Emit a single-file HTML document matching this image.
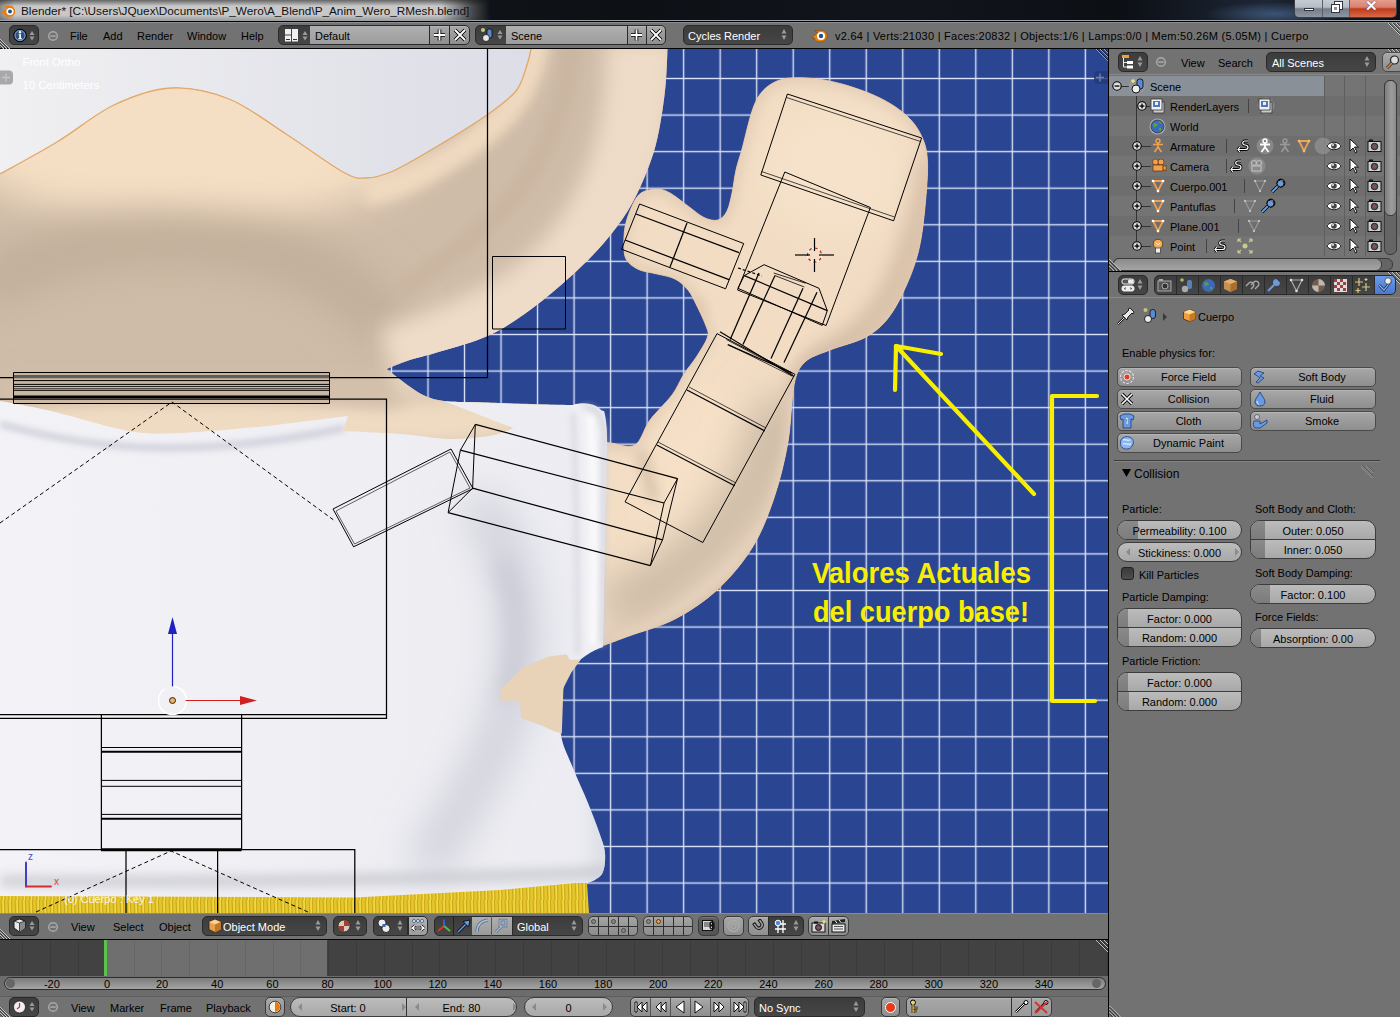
<!DOCTYPE html>
<html><head><meta charset="utf-8">
<style>
*{box-sizing:border-box;margin:0;padding:0}
html,body{width:1400px;height:1017px;overflow:hidden;background:#727272;font-family:"Liberation Sans",sans-serif;font-size:11px;color:#000}
div,span,svg{position:absolute}
.t{white-space:nowrap;line-height:12px}
#title{left:0;top:0;width:1400px;height:22px;background:linear-gradient(90deg,#15181e 0,#0d1015 45%,#11141b 65%,#0c0f14 80%,#1d2634 90%,#0e1117 100%)}
#hdr{left:0;top:22px;width:1400px;height:27px;background:#727272}
#vp{left:0;top:49px;width:1108px;height:864px;overflow:hidden}
#vsep{left:1108px;top:48px;width:1px;height:969px;background:#000}
#rp{left:1109px;top:49px;width:291px;height:968px;background:#727272;overflow:hidden}
#h3d{left:0;top:913px;width:1108px;height:27px;background:#727272}
#tl{left:0;top:940px;width:1108px;height:37px;background:#424242}
#ruler{left:0;top:976px;width:1108px;height:20px;background:#6c6c6c}
#hbot{left:0;top:996px;width:1108px;height:21px;background:#727272}
.dk{background:linear-gradient(#3c3c3c,#464646);border:1px solid #2a2a2a;border-radius:5px}
.lf{background:linear-gradient(#b0b0b0,#9c9c9c);border-top:1px solid #2a2a2a;border-bottom:1px solid #2a2a2a}
.btn{background:linear-gradient(#a8a8a8,#8e8e8e);border:1px solid #4a4a4a;border-radius:5px;box-shadow:inset 0 1px 0 rgba(255,255,255,.15)}
.num{background:linear-gradient(#bcbcbc,#a8a8a8);border:1px solid #3c3c3c;border-radius:9px;overflow:hidden}
.c{text-align:center}
</style></head>
<body>
<div id="title">
<div style="left:0;top:0;width:490px;height:20px;background:linear-gradient(180deg,rgba(20,20,20,.55) 0,rgba(20,20,20,0) 30%,rgba(20,20,20,0) 75%,rgba(40,40,40,.25) 100%),linear-gradient(90deg,rgba(150,150,150,.9) 0,rgba(200,200,200,1) 3%,rgba(200,200,200,1) 90%,rgba(120,120,120,.6) 96%,rgba(30,30,30,0) 100%)"></div>
<div style="left:1150px;top:0;width:240px;height:20px;background:radial-gradient(ellipse 70px 12px at 125px 14px,rgba(80,115,160,.6),rgba(40,60,90,0) 100%)"></div>
<svg style="left:1px;top:4px" width="16" height="14" viewBox="0 0 16 14"><path d="M1,8 L6,4 L3,2 L7,2 C9,1 13,2 14,6 C15,10 12,13 8,13 C5,13 3,11 3,9 L1,9Z" fill="#e87d0d"/><circle cx="9" cy="7.5" r="3.6" fill="#fff"/><circle cx="9" cy="7.5" r="2" fill="#24528a"/></svg>
<div class="t" style="left:21px;top:4px;font-size:11.75px;line-height:14px;color:#111">Blender* [C:\Users\JQuex\Documents\P_Wero\A_Blend\P_Anim_Wero_RMesh.blend]</div>
<div style="left:0;top:20px;width:1400px;height:1px;background:#9aa0a8"></div>
<div style="left:0;top:21px;width:1400px;height:1px;background:#000"></div>
<div style="left:1294px;top:-1px;width:103px;height:19px;border:1px solid #3a3f48;border-top:none;border-radius:0 0 5px 5px;overflow:hidden">
<div style="left:0;top:0;width:28px;height:18px;background:linear-gradient(#c8cdd4 0,#b7bdc5 45%,#767d88 55%,#8e96a2 100%);border-right:1px solid #5a606a"></div>
<div style="left:28px;top:0;width:27px;height:18px;background:linear-gradient(#c8cdd4 0,#b7bdc5 45%,#767d88 55%,#8e96a2 100%);border-right:1px solid #5a606a"></div>
<div style="left:55px;top:0;width:47px;height:18px;background:linear-gradient(#e8a090 0,#d88270 45%,#c03a1a 55%,#d86a4a 100%)"></div>
<div style="left:9px;top:9px;width:10px;height:3px;background:#fff;border:1px solid #334"></div>
<div style="left:40px;top:3px;width:7px;height:7px;border:2px solid #fff;outline:1px solid #334"></div><div style="left:37px;top:6px;width:7px;height:7px;border:2px solid #fff;outline:1px solid #334;background:#8a909a"></div>
<div class="t" style="left:70px;top:1px;font-size:15px;font-weight:bold;color:#fff;text-shadow:0 0 1px #000">&#x2715;</div>
</div>
</div>

<div id="hdr">
<div style="left:0;top:0;width:1400px;height:1px;background:#8d8d8d"></div>
<div style="left:0;top:26px;width:1400px;height:1px;background:#000"></div>
<svg style="left:0;top:16px" width="12" height="11" viewBox="0 0 12 11"><path d="M0,1 L10,11 M0,4 L7,11 M0,7 L4,11" stroke="#c8c8c8" stroke-width="1"/><path d="M0,2 L9,11 M0,5 L6,11 M0,8 L3,11" stroke="#3a3a3a" stroke-width="1"/></svg>
<svg style="left:1386px;top:1px" width="14" height="12" viewBox="0 0 14 12"><path d="M2,0 L14,12 M6,0 L14,8 M10,0 L14,4" stroke="#c8c8c8" stroke-width="1"/><path d="M3,0 L14,11 M7,0 L14,7 M11,0 L14,3" stroke="#3a3a3a" stroke-width="1"/></svg>
<div class="dk" style="left:9px;top:3px;width:30px;height:20px"></div>
<svg style="left:13px;top:6px" width="24" height="15" viewBox="0 0 24 15"><circle cx="7" cy="7.5" r="6.3" fill="#2c5080" stroke="#000" stroke-width="1"/><circle cx="7" cy="7.5" r="5" fill="none" stroke="#9ab4d8" stroke-width="0.8"/><circle cx="7" cy="4.3" r="1.2" fill="#fff"/><path d="M5.6,6.3 L8,6.3 L8,10.3 L9,10.3 L9,11.3 L5.3,11.3 L5.3,10.3 L6.3,10.3 L6.3,7.3 L5.6,7.3Z" fill="#fff"/><path d="M19,3 L21.5,7 L16.5,7Z M16.5,8.5 L21.5,8.5 L19,12.5Z" fill="#9a9a9a"/></svg>
<svg style="left:47px;top:8px" width="12" height="12" viewBox="0 0 12 12"><circle cx="6" cy="6" r="4.3" fill="none" stroke="#a8a8a8" stroke-width="1.5"/><rect x="3.3" y="5.3" width="5.4" height="1.5" fill="#a8a8a8"/></svg>
<div class="t" style="left:70px;top:8px">File</div>
<div class="t" style="left:103px;top:8px">Add</div>
<div class="t" style="left:137px;top:8px">Render</div>
<div class="t" style="left:187px;top:8px">Window</div>
<div class="t" style="left:241px;top:8px">Help</div>
<div class="dk" style="left:278px;top:3px;width:38px;height:20px;border-radius:5px 0 0 5px"></div>
<svg style="left:284px;top:6px" width="26" height="15" viewBox="0 0 26 15"><rect x="1" y="1" width="6" height="5.5" fill="#f0f0f0"/><rect x="1" y="7.5" width="6" height="6" fill="#f0f0f0"/><rect x="8" y="1" width="6" height="12.5" fill="#f0f0f0"/><rect x="2" y="11" width="4" height="1" fill="#333"/><rect x="9" y="11" width="4" height="1" fill="#333"/><path d="M21,3 L23.5,7 L18.5,7Z M18.5,8.5 L23.5,8.5 L21,12.5Z" fill="#9a9a9a"/></svg>
<div class="lf" style="left:310px;top:3px;width:120px;height:20px"></div>
<div class="t" style="left:315px;top:8px">Default</div>
<div class="btn" style="left:429px;top:3px;width:21px;height:20px;border-radius:0;border-color:#2a2a2a"></div>
<div class="btn" style="left:449px;top:3px;width:21px;height:20px;border-radius:0 5px 5px 0;border-color:#2a2a2a"></div>
<svg style="left:432px;top:6px" width="36" height="14" viewBox="0 0 36 14"><path d="M7.5,1.5 L7.5,12.5 M2,7 L13,7" stroke="#000" stroke-width="3.6"/><path d="M7.5,1.5 L7.5,12.5 M2,7 L13,7" stroke="#fff" stroke-width="1.8"/><path d="M23,2 L33,12 M33,2 L23,12" stroke="#000" stroke-width="3.6"/><path d="M23,2 L33,12 M33,2 L23,12" stroke="#fff" stroke-width="1.8"/></svg>
<div class="dk" style="left:475px;top:3px;width:36px;height:20px;border-radius:5px 0 0 5px"></div>
<svg style="left:480px;top:5px" width="26" height="16" viewBox="0 0 26 16"><circle cx="3" cy="3" r="2" fill="#e8e890" opacity=".8"/><rect x="7" y="2" width="5" height="9" rx="2" fill="#5a88c8" stroke="#000" stroke-width=".7"/><circle cx="6" cy="11" r="3.5" fill="#e8e8e8" stroke="#000" stroke-width=".7"/><path d="M20,3 L22.5,7 L17.5,7Z M17.5,8.5 L22.5,8.5 L20,12.5Z" fill="#9a9a9a"/></svg>
<div class="lf" style="left:506px;top:3px;width:122px;height:20px"></div>
<div class="t" style="left:511px;top:8px">Scene</div>
<div class="btn" style="left:627px;top:3px;width:20px;height:20px;border-radius:0;border-color:#2a2a2a"></div>
<div class="btn" style="left:646px;top:3px;width:20px;height:20px;border-radius:0 5px 5px 0;border-color:#2a2a2a"></div>
<svg style="left:629px;top:6px" width="36" height="14" viewBox="0 0 36 14"><path d="M7.5,1.5 L7.5,12.5 M2,7 L13,7" stroke="#000" stroke-width="3.6"/><path d="M7.5,1.5 L7.5,12.5 M2,7 L13,7" stroke="#fff" stroke-width="1.8"/><path d="M22,2 L32,12 M32,2 L22,12" stroke="#000" stroke-width="3.6"/><path d="M22,2 L32,12 M32,2 L22,12" stroke="#fff" stroke-width="1.8"/></svg>
<div class="dk" style="left:683px;top:3px;width:110px;height:20px"></div>
<div class="t" style="left:688px;top:8px;color:#fff">Cycles Render</div>
<svg style="left:779px;top:6px" width="10" height="14" viewBox="0 0 10 14"><path d="M5,1 L7.5,5.5 L2.5,5.5Z M2.5,7.5 L7.5,7.5 L5,12Z" fill="#9a9a9a"/></svg>
<svg style="left:811px;top:6px" width="18" height="15" viewBox="0 0 18 15"><path d="M1,9 L7,4.5 L3.5,2.5 L8,2.5 C10.5,1.5 15,2.5 16,6.5 C17,11 13.5,14 9,14 C5.5,14 3.5,12 3.5,10 L1,10Z" fill="#e87d0d" stroke="#7a3a00" stroke-width=".5"/><circle cx="10" cy="8" r="4" fill="#fff"/><circle cx="10" cy="8" r="2.2" fill="#24528a"/></svg>
<div class="t" style="left:835px;top:8px;letter-spacing:0.25px">v2.64 | Verts:21030 | Faces:20832 | Objects:1/6 | Lamps:0/0 | Mem:50.26M (5.05M) | Cuerpo</div>
</div>

<div id="vp"><svg width="1108" height="864" viewBox="0 49 1108 864">
<defs>
<pattern id="grid" x="592.34" y="60.215" width="36.52" height="36.57" patternUnits="userSpaceOnUse">
<rect width="36.52" height="36.57" fill="#2a4591"/>
<rect x="17.56" y="0" width="1.4" height="36.57" fill="#d8e2fa"/>
<rect x="0" y="17.585" width="36.52" height="1.4" fill="#d8e2fa"/>
</pattern>
<linearGradient id="gGray" x1="0" y1="0" x2="1" y2="0">
<stop offset="0" stop-color="#f0f0f2"/><stop offset="1" stop-color="#dcdde6"/>
</linearGradient>
<linearGradient id="gShirt" x1="0" y1="0" x2="1" y2="0">
<stop offset="0" stop-color="#f3f3f7"/><stop offset="0.6" stop-color="#eeeef3"/><stop offset="1" stop-color="#ececf2"/>
</linearGradient>
<filter id="b20" filterUnits="userSpaceOnUse" x="-200" y="-100" width="1500" height="1200"><feGaussianBlur stdDeviation="20"/></filter>
<filter id="b10" filterUnits="userSpaceOnUse" x="-200" y="-100" width="1500" height="1200"><feGaussianBlur stdDeviation="10"/></filter>
<filter id="b6" filterUnits="userSpaceOnUse" x="-200" y="-100" width="1500" height="1200"><feGaussianBlur stdDeviation="6"/></filter>
<filter id="b3" filterUnits="userSpaceOnUse" x="-200" y="-100" width="1500" height="1200"><feGaussianBlur stdDeviation="3"/></filter>
<clipPath id="cpShoulder"><path d="M0.0,174.0 C0.0,174.0 38.0,153.5 57.0,142.0 C76.0,130.5 95.0,114.0 114.0,105.0 C133.0,96.0 151.8,89.0 171.0,88.0 C190.2,87.0 209.8,91.3 229.0,99.0 C248.2,106.7 267.0,121.8 286.0,134.0 C305.0,146.2 329.7,164.7 343.0,172.0 C356.3,179.3 357.7,178.2 366.0,178.0 C374.3,177.8 381.3,176.2 393.0,171.0 C404.7,165.8 420.3,156.3 436.0,147.0 C451.7,137.7 473.7,124.3 487.0,115.0 C500.3,105.7 509.3,99.3 516.0,91.0 C522.7,82.7 524.5,72.0 527.0,65.0 C529.5,58.0 531.0,49.0 531.0,49.0 C531.0,49.0 667.5,49.0 667.5,49.0 C667.5,49.0 666.9,69.9 666.0,80.6 C665.1,91.3 663.8,102.4 662.0,113.3 C660.2,124.2 658.5,135.1 655.5,146.0 C652.5,156.9 648.6,167.8 644.0,178.6 C639.4,189.4 634.5,200.1 627.7,211.0 C620.9,221.9 612.5,233.1 603.0,244.0 C593.5,254.9 582.5,265.7 570.6,276.5 C558.7,287.3 545.0,299.2 531.4,309.0 C517.8,318.8 504.2,328.2 489.0,335.3 C473.8,342.4 453.7,347.3 440.0,351.6 C426.3,355.9 415.8,358.1 407.0,361.0 C398.2,363.9 387.0,369.0 387.0,369.0 C387.0,369.0 387.3,369.8 393.0,374.0 C398.7,378.2 412.5,389.5 421.0,394.0 C429.5,398.5 435.8,399.7 444.0,401.0 C452.2,402.3 470.0,402.0 470.0,402.0 C470.0,402.0 560.0,405.0 560.0,405.0 C560.0,405.0 560.0,480.0 560.0,480.0 C560.0,480.0 0.0,480.0 0.0,480.0 C0.0,480.0 0.0,174.0 0.0,174.0 Z"/></clipPath>
<clipPath id="cpHand"><path d="M777.0,81.0 C785.5,77.2 796.2,77.5 807.0,78.0 C817.8,78.5 829.8,80.7 842.0,84.0 C854.2,87.3 869.2,92.7 880.0,98.0 C890.8,103.3 900.0,109.5 907.0,116.0 C914.0,122.5 918.6,129.3 922.0,137.0 C925.4,144.7 927.0,150.3 927.5,162.0 C928.0,173.7 926.4,192.5 925.0,207.0 C923.6,221.5 922.0,236.2 919.0,249.0 C916.0,261.8 912.0,272.7 907.0,284.0 C902.0,295.3 895.8,308.2 889.0,317.0 C882.2,325.8 875.8,331.5 866.0,337.0 C856.2,342.5 840.2,345.8 830.0,350.0 C819.8,354.2 811.0,356.2 805.0,362.0 C799.0,367.8 796.8,371.7 794.0,385.0 C791.2,398.3 791.3,423.2 788.0,442.0 C784.7,460.8 780.0,480.3 774.0,498.0 C768.0,515.7 761.5,532.7 752.0,548.0 C742.5,563.3 729.8,578.2 717.0,590.0 C704.2,601.8 689.7,611.3 675.0,619.0 C660.3,626.7 641.2,631.5 629.0,636.0 C616.8,640.5 602.0,646.0 602.0,646.0 C602.0,646.0 560.0,650.0 560.0,650.0 C560.0,650.0 560.0,440.0 560.0,440.0 C560.0,440.0 584.5,439.5 593.0,440.0 C601.5,440.5 604.0,442.2 611.0,443.0 C618.0,443.8 628.5,448.8 635.0,445.0 C641.5,441.2 643.8,428.3 650.0,420.0 C656.2,411.7 666.3,402.7 672.0,395.0 C677.7,387.3 679.8,380.5 684.0,374.0 C688.2,367.5 693.1,362.2 697.0,356.0 C700.9,349.8 706.0,342.0 707.5,337.0 C709.0,332.0 707.8,331.2 706.0,326.0 C704.2,320.8 700.0,312.0 697.0,306.0 C694.0,300.0 691.7,294.5 688.0,290.0 C684.3,285.5 680.2,281.7 675.0,279.0 C669.8,276.3 663.1,275.6 657.0,274.0 C650.9,272.4 643.5,271.8 638.5,269.5 C633.5,267.2 629.4,263.9 627.0,260.5 C624.6,257.1 624.3,254.6 624.0,249.0 C623.7,243.4 623.7,234.2 625.0,227.0 C626.3,219.8 629.3,211.7 632.0,206.0 C634.7,200.3 636.8,195.8 641.0,193.0 C645.2,190.2 652.2,189.0 657.0,189.0 C661.8,189.0 664.8,190.2 670.0,193.0 C675.2,195.8 682.3,201.9 688.0,206.0 C693.7,210.1 699.0,215.2 704.0,217.5 C709.0,219.8 714.2,221.1 718.0,220.0 C721.8,218.9 724.7,215.5 727.0,211.0 C729.3,206.5 730.5,199.8 732.0,193.0 C733.5,186.2 734.3,177.3 736.0,170.0 C737.7,162.7 738.7,160.5 742.0,149.0 C745.3,137.5 750.2,112.3 756.0,101.0 C761.8,89.7 768.5,84.8 777.0,81.0 Z"/></clipPath>
<clipPath id="cpShirt"><path d="M0.0,401.0 C0.0,401.0 29.5,406.0 51.0,411.0 C72.5,416.0 107.5,427.3 129.0,431.0 C150.5,434.7 158.7,433.7 180.0,433.0 C201.3,432.3 234.3,429.2 257.0,427.0 C279.7,424.8 300.8,421.8 316.0,420.0 C331.2,418.2 348.0,416.0 348.0,416.0 C348.0,416.0 343.0,431.0 343.0,431.0 C343.0,431.0 383.2,432.7 401.0,434.0 C418.8,435.3 435.0,438.7 450.0,439.0 C465.0,439.3 480.5,437.4 491.0,435.6 C501.5,433.8 513.0,428.0 513.0,428.0 C513.0,428.0 445.0,401.6 445.0,401.6 C445.0,401.6 498.3,403.4 520.0,404.0 C541.7,404.6 575.0,405.0 575.0,405.0 C575.0,405.0 604.0,411.0 604.0,411.0 C604.0,411.0 606.8,418.8 607.0,437.0 C607.2,455.2 605.7,492.8 605.0,520.0 C604.3,547.2 603.5,579.0 603.0,600.0 C602.5,621.0 602.0,646.0 602.0,646.0 C602.0,646.0 584.8,655.5 579.0,661.0 C573.2,666.5 569.8,673.0 567.0,679.0 C564.2,685.0 563.0,687.7 562.0,697.0 C561.0,706.3 559.2,723.2 561.0,735.0 C562.8,746.8 568.5,756.7 573.0,768.0 C577.5,779.3 583.7,792.3 588.0,803.0 C592.3,813.7 596.2,823.7 599.0,832.0 C601.8,840.3 604.5,846.0 605.0,853.0 C605.5,860.0 604.8,869.0 602.0,874.0 C599.2,879.0 588.0,883.0 588.0,883.0 C588.0,883.0 560.0,900.0 560.0,900.0 C560.0,900.0 0.0,900.0 0.0,900.0 C0.0,900.0 0.0,401.0 0.0,401.0 Z"/></clipPath>
</defs>
<rect x="0" y="49" width="1108" height="864" fill="url(#grid)"/>
<path d="M0.0,49.0 C0.0,49.0 -9.5,158.5 0.0,174.0 C9.5,189.5 38.0,153.5 57.0,142.0 C76.0,130.5 95.0,114.0 114.0,105.0 C133.0,96.0 151.8,89.0 171.0,88.0 C190.2,87.0 209.8,91.3 229.0,99.0 C248.2,106.7 267.0,121.8 286.0,134.0 C305.0,146.2 329.7,164.7 343.0,172.0 C356.3,179.3 357.7,178.2 366.0,178.0 C374.3,177.8 381.3,176.2 393.0,171.0 C404.7,165.8 420.3,156.3 436.0,147.0 C451.7,137.7 473.7,124.3 487.0,115.0 C500.3,105.7 509.3,99.3 516.0,91.0 C522.7,82.7 524.5,72.0 527.0,65.0 C529.5,58.0 531.0,49.0 531.0,49.0 C531.0,49.0 0.0,49.0 0.0,49.0 Z L531,49 Z" fill="url(#gGray)"/>
<g clip-path="url(#cpShoulder)">
<rect x="0" y="49" width="700" height="440" fill="#cfbca8"/>
<ellipse cx="190" cy="140" rx="230" ry="85" fill="#f5dfc4" filter="url(#b20)"/>
<path d="M-20,290 C60,240 160,228 260,250 C330,268 370,300 390,335" stroke="#c0ae9a" stroke-width="50" fill="none" filter="url(#b20)"/>
<path d="M0,392 L430,392" stroke="#d4c1ac" stroke-width="26" fill="none" filter="url(#b10)"/>
<ellipse cx="470" cy="345" rx="55" ry="30" fill="#dccab6" filter="url(#b20)"/>
<ellipse cx="460" cy="420" rx="70" ry="25" fill="#efdbc2" filter="url(#b10)"/>
<ellipse cx="200" cy="425" rx="260" ry="22" fill="#efdac2" filter="url(#b6)"/>
<path d="M640,40 C645,150 605,240 535,295 C480,335 430,350 390,362" stroke="#eedcc8" stroke-width="70" fill="none" filter="url(#b10)"/>
<path d="M572,40 C568,100 550,150 515,195 C490,225 460,250 400,290" stroke="#c9b5a0" stroke-width="18" fill="none" filter="url(#b6)"/>
<path d="M537,40 C529,95 502,127 442,162 C405,185 385,190 365,192" stroke="#efd9bf" stroke-width="26" fill="none" filter="url(#b6)"/>
</g>
<path d="M0.0,174.0 C9.5,168.7 38.0,153.5 57.0,142.0 C76.0,130.5 95.0,114.0 114.0,105.0 C133.0,96.0 151.8,89.0 171.0,88.0 C190.2,87.0 209.8,91.3 229.0,99.0 C248.2,106.7 267.0,121.8 286.0,134.0 C305.0,146.2 329.7,164.7 343.0,172.0 C356.3,179.3 357.7,178.2 366.0,178.0 C374.3,177.8 381.3,176.2 393.0,171.0 C404.7,165.8 420.3,156.3 436.0,147.0 C451.7,137.7 473.7,124.3 487.0,115.0 C500.3,105.7 509.3,99.3 516.0,91.0 C522.7,82.7 524.5,72.0 527.0,65.0 C529.5,58.0 531.0,49.0 531.0,49.0" stroke="#e4a868" stroke-width="1.3" fill="none"/>
<g clip-path="url(#cpHand)">
<rect x="540" y="60" width="400" height="600" fill="#f2ddc4"/>
<path d="M777.0,81.0 C785.5,77.2 796.2,77.5 807.0,78.0 C817.8,78.5 829.8,80.7 842.0,84.0 C854.2,87.3 869.2,92.7 880.0,98.0 C890.8,103.3 900.0,109.5 907.0,116.0 C914.0,122.5 918.6,129.3 922.0,137.0 C925.4,144.7 927.0,150.3 927.5,162.0 C928.0,173.7 926.4,192.5 925.0,207.0 C923.6,221.5 922.0,236.2 919.0,249.0 C916.0,261.8 912.0,272.7 907.0,284.0 C902.0,295.3 895.8,308.2 889.0,317.0 C882.2,325.8 875.8,331.5 866.0,337.0 C856.2,342.5 840.2,345.8 830.0,350.0 C819.8,354.2 811.0,356.2 805.0,362.0 C799.0,367.8 796.8,371.7 794.0,385.0 C791.2,398.3 791.3,423.2 788.0,442.0 C784.7,460.8 780.0,480.3 774.0,498.0 C768.0,515.7 761.5,532.7 752.0,548.0 C742.5,563.3 729.8,578.2 717.0,590.0 C704.2,601.8 689.7,611.3 675.0,619.0 C660.3,626.7 641.2,631.5 629.0,636.0 C616.8,640.5 602.0,646.0 602.0,646.0 C602.0,646.0 560.0,650.0 560.0,650.0 C560.0,650.0 560.0,440.0 560.0,440.0 C560.0,440.0 584.5,439.5 593.0,440.0 C601.5,440.5 604.0,442.2 611.0,443.0 C618.0,443.8 628.5,448.8 635.0,445.0 C641.5,441.2 643.8,428.3 650.0,420.0 C656.2,411.7 666.3,402.7 672.0,395.0 C677.7,387.3 679.8,380.5 684.0,374.0 C688.2,367.5 693.1,362.2 697.0,356.0 C700.9,349.8 706.0,342.0 707.5,337.0 C709.0,332.0 707.8,331.2 706.0,326.0 C704.2,320.8 700.0,312.0 697.0,306.0 C694.0,300.0 691.7,294.5 688.0,290.0 C684.3,285.5 680.2,281.7 675.0,279.0 C669.8,276.3 663.1,275.6 657.0,274.0 C650.9,272.4 643.5,271.8 638.5,269.5 C633.5,267.2 629.4,263.9 627.0,260.5 C624.6,257.1 624.3,254.6 624.0,249.0 C623.7,243.4 623.7,234.2 625.0,227.0 C626.3,219.8 629.3,211.7 632.0,206.0 C634.7,200.3 636.8,195.8 641.0,193.0 C645.2,190.2 652.2,189.0 657.0,189.0 C661.8,189.0 664.8,190.2 670.0,193.0 C675.2,195.8 682.3,201.9 688.0,206.0 C693.7,210.1 699.0,215.2 704.0,217.5 C709.0,219.8 714.2,221.1 718.0,220.0 C721.8,218.9 724.7,215.5 727.0,211.0 C729.3,206.5 730.5,199.8 732.0,193.0 C733.5,186.2 734.3,177.3 736.0,170.0 C737.7,162.7 738.7,160.5 742.0,149.0 C745.3,137.5 750.2,112.3 756.0,101.0 C761.8,89.7 768.5,84.8 777.0,81.0 Z" stroke="#e2ccb5" stroke-width="12" fill="none" filter="url(#b6)"/>
<path d="M925,160 C915,260 890,320 830,352 C795,372 792,420 782,480 C765,560 705,612 612,648" stroke="#d4bca4" stroke-width="22" fill="none" filter="url(#b10)"/>
<path d="M700,300 C690,330 660,360 640,420" stroke="#e2caae" stroke-width="16" fill="none" filter="url(#b6)"/>
<ellipse cx="835" cy="170" rx="70" ry="60" fill="#f6e2ca" filter="url(#b20)"/>
<ellipse cx="700" cy="480" rx="55" ry="110" fill="#f6e1c8" filter="url(#b20)" transform="rotate(25 700 480)"/>
<path d="M605,610 C640,600 690,570 730,520 C760,480 770,440 780,400" stroke="#c9b7a3" stroke-width="46" fill="none" filter="url(#b20)"/>
<path d="M610,640 C660,625 720,590 760,530 C785,490 792,440 795,390" stroke="#ead8c4" stroke-width="10" fill="none" filter="url(#b6)"/>
<path d="M640,450 C648,470 650,490 655,500" stroke="#d8c2ac" stroke-width="12" fill="none" filter="url(#b6)"/>
</g>
<path d="M777.0,81.0 C785.5,77.2 796.2,77.5 807.0,78.0 C817.8,78.5 829.8,80.7 842.0,84.0 C854.2,87.3 869.2,92.7 880.0,98.0 C890.8,103.3 900.0,109.5 907.0,116.0 C914.0,122.5 918.6,129.3 922.0,137.0 C925.4,144.7 927.0,150.3 927.5,162.0 C928.0,173.7 926.4,192.5 925.0,207.0 C923.6,221.5 922.0,236.2 919.0,249.0 C916.0,261.8 912.0,272.7 907.0,284.0 C902.0,295.3 895.8,308.2 889.0,317.0 C882.2,325.8 875.8,331.5 866.0,337.0 C856.2,342.5 840.2,345.8 830.0,350.0 C819.8,354.2 811.0,356.2 805.0,362.0 C799.0,367.8 796.8,371.7 794.0,385.0 C791.2,398.3 791.3,423.2 788.0,442.0 C784.7,460.8 780.0,480.3 774.0,498.0 C768.0,515.7 761.5,532.7 752.0,548.0 C742.5,563.3 729.8,578.2 717.0,590.0 C704.2,601.8 689.7,611.3 675.0,619.0 C660.3,626.7 641.2,631.5 629.0,636.0 C616.8,640.5 602.0,646.0 602.0,646.0 C602.0,646.0 560.0,650.0 560.0,650.0 C560.0,650.0 560.0,440.0 560.0,440.0 C560.0,440.0 584.5,439.5 593.0,440.0 C601.5,440.5 604.0,442.2 611.0,443.0 C618.0,443.8 628.5,448.8 635.0,445.0 C641.5,441.2 643.8,428.3 650.0,420.0 C656.2,411.7 666.3,402.7 672.0,395.0 C677.7,387.3 679.8,380.5 684.0,374.0 C688.2,367.5 693.1,362.2 697.0,356.0 C700.9,349.8 706.0,342.0 707.5,337.0 C709.0,332.0 707.8,331.2 706.0,326.0 C704.2,320.8 700.0,312.0 697.0,306.0 C694.0,300.0 691.7,294.5 688.0,290.0 C684.3,285.5 680.2,281.7 675.0,279.0 C669.8,276.3 663.1,275.6 657.0,274.0 C650.9,272.4 643.5,271.8 638.5,269.5 C633.5,267.2 629.4,263.9 627.0,260.5 C624.6,257.1 624.3,254.6 624.0,249.0 C623.7,243.4 623.7,234.2 625.0,227.0 C626.3,219.8 629.3,211.7 632.0,206.0 C634.7,200.3 636.8,195.8 641.0,193.0 C645.2,190.2 652.2,189.0 657.0,189.0 C661.8,189.0 664.8,190.2 670.0,193.0 C675.2,195.8 682.3,201.9 688.0,206.0 C693.7,210.1 699.0,215.2 704.0,217.5 C709.0,219.8 714.2,221.1 718.0,220.0 C721.8,218.9 724.7,215.5 727.0,211.0 C729.3,206.5 730.5,199.8 732.0,193.0 C733.5,186.2 734.3,177.3 736.0,170.0 C737.7,162.7 738.7,160.5 742.0,149.0 C745.3,137.5 750.2,112.3 756.0,101.0 C761.8,89.7 768.5,84.8 777.0,81.0 Z" stroke="#ecc6a0" stroke-width="0.8" fill="none"/>
<g clip-path="url(#cpShirt)">
<rect x="0" y="390" width="620" height="510" fill="url(#gShirt)"/>
<path d="M0,424 C100,452 200,458 345,428" stroke="#d0d0dc" stroke-width="7" fill="none" filter="url(#b3)"/>
<path d="M475,500 C525,560 530,650 505,720 C485,780 450,820 425,870" stroke="#cdcdd9" stroke-width="36" fill="none" filter="url(#b20)"/>
<path d="M500,560 C520,600 520,660 505,700" stroke="#c6c6d2" stroke-width="14" fill="none" filter="url(#b10)"/>
<path d="M595,720 C602,780 606,830 602,880" stroke="#d8d8e2" stroke-width="18" fill="none" filter="url(#b10)"/>
<path d="M0,881 C200,883 400,880 610,872" stroke="#c8c8d0" stroke-width="10" fill="none" filter="url(#b6)"/>
</g>
<path d="M500.5,689.7 L521.0,669.0 L533.5,663.0 L549.0,656.6 L566.5,654.3 L569.7,659.8 L580.7,659.8 L571.3,672.4 L563.4,688.0 L561.8,733.7 L552.4,730.6 L543.0,726.0 L521.0,718.0 L520.0,700.7 L500.5,700.7 Z" fill="#e8d2b8"/>
<path d="M568.0,408.0 C568.0,408.0 572.3,404.7 576.0,404.0 C579.7,403.3 585.8,403.0 590.0,404.0 C594.2,405.0 598.3,406.5 601.0,410.0 C603.7,413.5 605.2,418.3 606.0,425.0 C606.8,431.7 606.2,434.2 606.0,450.0 C605.8,465.8 605.3,495.0 605.0,520.0 C604.7,545.0 604.3,578.8 604.0,600.0 C603.7,621.2 603.0,647.0 603.0,647.0 C603.0,647.0 594.5,650.2 590.0,652.0 C585.5,653.8 576.0,658.0 576.0,658.0 C576.0,658.0 574.0,593.0 573.0,560.0 C572.0,527.0 570.8,485.3 570.0,460.0 C569.2,434.7 568.0,408.0 568.0,408.0 Z" fill="#efeff4"/>
<path d="M590,415 C594,450 595,560 594,645" stroke="#fbfbfd" stroke-width="8" fill="none" filter="url(#b3)"/>
<path d="M573,412 C575,450 577,560 578,655" stroke="#bdbdca" stroke-width="2.2" fill="none" filter="url(#b3)"/>
<path d="M604,440 C604,500 603,580 602,645" stroke="#cdcdd8" stroke-width="4" fill="none" filter="url(#b3)"/>
<path d="M583,407 C597,406 604,416 605,442" stroke="#c2c2ce" stroke-width="3" fill="none" filter="url(#b3)"/>
<pattern id="pp" x="0" y="0" width="7" height="20" patternUnits="userSpaceOnUse"><rect width="7" height="20" fill="#e6c62c"/><path d="M1,0 L2,20 M4.5,0 L5,20" stroke="#c8a818" stroke-width="1"/><path d="M3,0 L3.5,20" stroke="#f6e050" stroke-width="1"/></pattern>
<path d="M0.0,896.0 L354.0,897.5 L500.0,890.0 L576.0,883.0 L587.0,883.0 L589.0,913.0 L0.0,913.0 Z" fill="url(#pp)"/>
<path d="M487.5,49.0 L487.5,377.5 L0.0,377.5" stroke="#000" stroke-width="1.25" fill="none"/>
<path d="M492.5,256.5 L565.5,256.5 L565.5,329.0 L492.5,329.0 L492.5,256.5" stroke="#000" stroke-width="1.0" fill="none"/>
<rect x="13.5" y="372.5" width="316" height="31" fill="#c0ae9c" opacity="0.55"/>
<path d="M13.5,372.5 L329.5,372.5 L329.5,403.5 L13.5,403.5 L13.5,372.5" stroke="#000" stroke-width="1.0" fill="none"/>
<path d="M13.5,376.0 L329.5,376.0" stroke="#000" stroke-width="1" fill="none"/>
<path d="M13.5,380.6 L329.5,380.6" stroke="#000" stroke-width="1" fill="none"/>
<path d="M13.5,384.4 L329.5,384.4" stroke="#000" stroke-width="1" fill="none"/>
<path d="M13.5,386.5 L329.5,386.5" stroke="#000" stroke-width="0.8" fill="none"/>
<path d="M13.5,388.8 L329.5,388.8" stroke="#000" stroke-width="0.8" fill="none"/>
<path d="M13.5,390.5 L329.5,390.5" stroke="#000" stroke-width="0.8" fill="none"/>
<path d="M13.5,396.8 L329.5,396.8" stroke="#000" stroke-width="2.8" fill="none"/>
<path d="M0.0,399.0 L386.5,399.0 L386.5,718.3 L0.0,718.3" stroke="#000" stroke-width="1.25" fill="none"/>
<path d="M0.0,714.6 L386.5,714.6" stroke="#000" stroke-width="1.25" fill="none"/>
<path d="M0.0,523.0 L172.0,402.0 L334.6,520.7" stroke="#000" stroke-width="1.0" fill="none" stroke-dasharray="4 3"/>
<path d="M101.4,714.6 L101.4,850.0" stroke="#000" stroke-width="1.25" fill="none"/>
<path d="M241.6,714.6 L241.6,850.0" stroke="#000" stroke-width="1.25" fill="none"/>
<path d="M101.4,747.5 L241.6,747.5" stroke="#000" stroke-width="1" fill="none"/>
<path d="M101.4,751.7 L241.6,751.7" stroke="#000" stroke-width="2" fill="none"/>
<path d="M101.4,780.4 L241.6,780.4" stroke="#000" stroke-width="1" fill="none"/>
<path d="M101.4,786.3 L241.6,786.3" stroke="#000" stroke-width="1" fill="none"/>
<path d="M101.4,814.4 L241.6,814.4" stroke="#000" stroke-width="1" fill="none"/>
<path d="M101.4,818.7 L241.6,818.7" stroke="#000" stroke-width="2" fill="none"/>
<path d="M0.0,849.5 L354.8,849.5 L354.8,913.0" stroke="#000" stroke-width="1.25" fill="none"/>
<path d="M101.0,849.8 L241.6,849.8" stroke="#000" stroke-width="3" fill="none"/>
<path d="M126.0,850.0 L126.0,913.0" stroke="#000" stroke-width="1.25" fill="none"/>
<path d="M217.6,850.0 L217.6,913.0" stroke="#000" stroke-width="1.25" fill="none"/>
<path d="M36.0,912.0 L171.0,851.0 L308.0,912.0" stroke="#000" stroke-width="1.0" fill="none" stroke-dasharray="4 3"/>
<path d="M333.0,509.0 L353.6,546.8 L473.0,488.6 L451.0,449.0 L333.0,509.0" stroke="#000" stroke-width="1.0" fill="none"/>
<path d="M336.0,511.0 L354.5,544.0 L470.0,488.0 L450.0,452.0 L336.0,511.0" stroke="#000" stroke-width="0.6" fill="none"/>
<path d="M475.3,424.4 L677.5,478.7" stroke="#000" stroke-width="1.25" fill="none"/>
<path d="M448.1,512.6 L650.4,565.6" stroke="#000" stroke-width="1.25" fill="none"/>
<path d="M460.4,450.2 L664.0,503.0" stroke="#000" stroke-width="1.25" fill="none"/>
<path d="M472.6,488.2 L662.6,539.8" stroke="#000" stroke-width="1.25" fill="none"/>
<path d="M475.3,424.4 L472.6,488.2 L448.1,512.6 L460.4,450.2 L475.3,424.4" stroke="#000" stroke-width="1.0" fill="none"/>
<path d="M677.5,478.7 L662.6,539.8 L650.4,565.6 L664.0,503.0 L677.5,478.7" stroke="#000" stroke-width="1.0" fill="none"/>
<path d="M717.0,333.6 L794.9,374.3 L702.8,542.5 L625.0,501.8 L717.0,333.6" stroke="#000" stroke-width="1.0" fill="none"/>
<path d="M687.0,390.0 L764.8,431.0" stroke="#000" stroke-width="1.25" fill="none"/>
<path d="M689.0,387.0 L766.0,428.0" stroke="#000" stroke-width="0.7" fill="none"/>
<path d="M656.8,445.0 L734.7,485.8" stroke="#000" stroke-width="1.25" fill="none"/>
<path d="M658.0,442.0 L736.0,483.0" stroke="#000" stroke-width="0.7" fill="none"/>
<path d="M729.0,345.0 L792.0,376.0" stroke="#000" stroke-width="0.7" fill="none"/>
<path d="M787.4,94.0 L921.6,138.0 L893.6,220.8 L760.8,175.0 L787.4,94.0" stroke="#000" stroke-width="1.0" fill="none"/>
<path d="M786.5,97.5 L920.5,141.5" stroke="#000" stroke-width="0.7" fill="none"/>
<path d="M761.5,171.5 L894.5,217.0" stroke="#000" stroke-width="0.7" fill="none"/>
<path d="M784.8,172.0 L870.4,207.5 L826.1,325.5 L737.6,290.0 L784.8,172.0" stroke="#000" stroke-width="1.0" fill="none"/>
<path d="M764.1,264.7 L819.0,288.3 L827.3,310.7 L822.2,325.4 L737.9,288.3 L744.3,275.6 L764.1,264.7" stroke="#000" stroke-width="1.0" fill="none"/>
<path d="M744.3,275.6 L827.3,310.7" stroke="#000" stroke-width="1.25" fill="none"/>
<path d="M759.0,273.0 L730.2,339.5" stroke="#000" stroke-width="1.25" fill="none"/>
<path d="M775.0,275.6 L743.0,344.6" stroke="#000" stroke-width="1.25" fill="none"/>
<path d="M803.0,288.3 L771.0,358.6" stroke="#000" stroke-width="1.25" fill="none"/>
<path d="M817.0,292.2 L784.0,362.5" stroke="#000" stroke-width="1.25" fill="none"/>
<path d="M720.0,331.8 L794.0,376.5" stroke="#000" stroke-width="1.25" fill="none"/>
<path d="M727.7,344.6 L791.6,372.7" stroke="#000" stroke-width="1.25" fill="none"/>
<path d="M726.4,339.5 L792.8,374.6" stroke="#000" stroke-width="0.8" fill="none"/>
<path d="M775.0,275.6 L804.3,287.0" stroke="#000" stroke-width="0.8" fill="none"/>
<path d="M773.7,273.0 L805.6,283.2" stroke="#000" stroke-width="0.8" fill="none"/>
<path d="M738.0,268.0 L762.0,276.0" stroke="#000" stroke-width="1.25" fill="none" stroke-dasharray="3 2"/>
<path d="M639.6,204.0 L743.7,243.5 L725.6,288.8 L621.5,249.2 L639.6,204.0" stroke="#000" stroke-width="1.0" fill="none"/>
<path d="M636.0,214.0 L739.0,252.6" stroke="#000" stroke-width="1.25" fill="none"/>
<path d="M625.0,240.0 L729.0,279.7" stroke="#000" stroke-width="1.25" fill="none"/>
<path d="M687.0,223.0 L670.0,267.0" stroke="#000" stroke-width="1.25" fill="none"/>
<circle cx="814.5" cy="255" r="7" fill="none" stroke="#fff" stroke-width="1.2" stroke-dasharray="3 3"/><circle cx="814.5" cy="255" r="7" fill="none" stroke="#c02020" stroke-width="1.2" stroke-dasharray="3 3" stroke-dashoffset="3"/>
<path d="M814.5,238.0 L814.5,251.0" stroke="#000" stroke-width="1.2" fill="none"/>
<path d="M814.5,259.0 L814.5,272.0" stroke="#000" stroke-width="1.2" fill="none"/>
<path d="M795.0,255.0 L810.0,255.0" stroke="#000" stroke-width="1.2" fill="none"/>
<path d="M819.0,255.0 L834.0,255.0" stroke="#000" stroke-width="1.2" fill="none"/>
<circle cx="172.5" cy="700.5" r="14" fill="none" stroke="#fff" stroke-width="1.5" stroke-dasharray="80 8" stroke-dashoffset="-65"/>
<path d="M172.5,686.0 L172.5,632.0" stroke="#2020c0" stroke-width="1.2" fill="none" stroke-linecap="round" stroke-linejoin="round"/>
<path d="M172.5,617 L168,634 L177,634Z" fill="#2020c0"/>
<path d="M186.0,700.5 L242.0,700.5" stroke="#d02020" stroke-width="1.2" fill="none" stroke-linecap="round" stroke-linejoin="round"/>
<path d="M257,700.5 L240,696 L240,705Z" fill="#d02020"/>
<circle cx="172.5" cy="700.5" r="3" fill="#f0b060" stroke="#000" stroke-width=".8"/>
<path d="M26.0,862.5 L26.0,886.6" stroke="#4040c0" stroke-width="2" fill="none" stroke-linecap="round" stroke-linejoin="round"/>
<path d="M26.0,886.6 L51.0,886.6" stroke="#d03030" stroke-width="2" fill="none" stroke-linecap="round" stroke-linejoin="round"/>
<path d="M1034.0,494.0 L896.0,346.0" stroke="#f8ef00" stroke-width="4.2" fill="none" stroke-linecap="round" stroke-linejoin="round"/>
<path d="M941.0,354.0 L896.0,346.0 L895.0,390.0" stroke="#f8ef00" stroke-width="4.2" fill="none" stroke-linecap="round" stroke-linejoin="round"/>
<path d="M1097.0,396.0 L1052.0,396.0 L1052.0,701.0 L1095.0,701.0" stroke="#f8ef00" stroke-width="4.2" fill="none" stroke-linecap="round" stroke-linejoin="round"/>
<text x="812" y="583" font-family="Liberation Sans" font-weight="bold" font-size="29" fill="#f8ef00" textLength="219" lengthAdjust="spacingAndGlyphs">Valores Actuales</text>
<text x="813" y="621.5" font-family="Liberation Sans" font-weight="bold" font-size="29" fill="#f8ef00" textLength="216" lengthAdjust="spacingAndGlyphs">del cuerpo base!</text>
<text x="22.5" y="65.5" font-family="Liberation Sans" font-size="11.3" fill="#ffffff">Front Ortho</text>
<text x="22.5" y="89" font-family="Liberation Sans" font-size="11.3" fill="#ffffff">10 Centimeters</text>
<rect x="-6" y="70.5" width="19" height="14" rx="4" fill="#a8a8a8"/>
<path d="M6,73.5 L6,81.5 M2,77.5 L10,77.5" stroke="#c4c4c4" stroke-width="1.4"/>
<rect x="1094" y="71" width="20" height="13" rx="4" fill="#23397a" opacity=".85"/>
<path d="M1100,73.5 L1100,81.5 M1096,77.5 L1104,77.5" stroke="#7080b0" stroke-width="1.4"/>
<path d="M1096,49 L1108,61 M1100,49 L1108,57 M1104,49 L1108,53" stroke="#8aa0d8" stroke-width="1"/><path d="M1097,49 L1108,60 M1101,49 L1108,56 M1105,49 L1108,52" stroke="#101830" stroke-width="1"/>
<text x="28" y="860" font-family="Liberation Sans" font-size="10" fill="#4a4ad0">z</text>
<text x="54" y="885" font-family="Liberation Sans" font-size="10" fill="#d04040">x</text>
<text x="64" y="903" font-family="Liberation Sans" font-size="11" fill="#f4f4f4">(0) Cuerpo : Key 1</text>
</svg></div>
<!--VPOVERLAY-->
<div id="vsep"></div>
<div id="rp"><div class="" style="left:0.0px;top:0.0px;width:291.0px;height:26.0px;background:#727272"></div>
<div class="" style="left:0.0px;top:25.0px;width:291.0px;height:1.0px;background:#8a8a8a"></div>
<svg style="left:277.0px;top:0.0px" width="14" height="12" viewBox="0 0 14 12"><path d="M2,0 L14,12 M6,0 L14,8 M10,0 L14,4" stroke="#c8c8c8" stroke-width="1"/><path d="M3,0 L14,11 M7,0 L14,7 M11,0 L14,3" stroke="#3a3a3a" stroke-width="1"/></svg>
<div class="dk" style="left:9.0px;top:3.0px;width:30.0px;height:20.0px;"></div>
<svg style="left:12.0px;top:5.0px" width="26" height="16" viewBox="0 0 26 16"><rect x="1" y="1" width="7" height="3" fill="#f0a040"/><path d="M2.5,4 L2.5,13 L6,13 M2.5,8.5 L6,8.5" stroke="#eee" stroke-width="1" fill="none"/><rect x="6" y="7" width="6" height="3" fill="#fff"/><rect x="6" y="11.5" width="6" height="3" fill="#fff"/><g transform="translate(14,1)"><path d="M5,1 L7.5,5.5 L2.5,5.5Z M2.5,7.5 L7.5,7.5 L5,12Z" fill="#9a9a9a"/></g></svg>
<svg style="left:46.0px;top:7.0px" width="12" height="12" viewBox="0 0 12 12"><circle cx="6" cy="6" r="4.3" fill="none" stroke="#a8a8a8" stroke-width="1.5"/><rect x="3.3" y="5.3" width="5.4" height="1.5" fill="#a8a8a8"/></svg>
<div class="t" style="left:72.0px;top:8.0px;">View</div>
<div class="t" style="left:109.0px;top:8.0px;">Search</div>
<div class="dk" style="left:157.0px;top:3.0px;width:110.0px;height:20.0px;"></div>
<div class="t" style="left:163.0px;top:8.0px;color:#fff">All Scenes</div>
<svg style="left:253.0px;top:6.0px" width="10" height="14" viewBox="0 0 10 14"><path d="M5,1 L7.5,5.5 L2.5,5.5Z M2.5,7.5 L7.5,7.5 L5,12Z" fill="#9a9a9a"/></svg>
<div class="btn" style="left:273.0px;top:3.0px;width:22.0px;height:20.0px;"></div>
<svg style="left:276.0px;top:5.0px" width="16" height="16" viewBox="0 0 16 16"><circle cx="9.5" cy="6" r="4" fill="#ddd" stroke="#222" stroke-width="1.2"/><path d="M7,9 L2,14" stroke="#222" stroke-width="3"/><path d="M7,9 L2,14" stroke="#e88a3a" stroke-width="1.6"/></svg>
<div class="" style="left:0.0px;top:27.0px;width:291.0px;height:20.0px;background:#747474"></div>
<div class="" style="left:0.0px;top:47.0px;width:291.0px;height:20.0px;background:#6e6e6e"></div>
<div class="" style="left:0.0px;top:67.0px;width:291.0px;height:20.0px;background:#747474"></div>
<div class="" style="left:0.0px;top:87.0px;width:291.0px;height:20.0px;background:#6e6e6e"></div>
<div class="" style="left:0.0px;top:107.0px;width:291.0px;height:20.0px;background:#747474"></div>
<div class="" style="left:0.0px;top:127.0px;width:291.0px;height:20.0px;background:#6e6e6e"></div>
<div class="" style="left:0.0px;top:147.0px;width:291.0px;height:20.0px;background:#747474"></div>
<div class="" style="left:0.0px;top:167.0px;width:291.0px;height:20.0px;background:#6e6e6e"></div>
<div class="" style="left:0.0px;top:187.0px;width:291.0px;height:20.0px;background:#747474"></div>
<div class="" style="left:0.0px;top:27.0px;width:215.0px;height:20.0px;background:#8a9098"></div>
<div class="" style="left:0.0px;top:207.0px;width:291.0px;height:2.0px;background:#727272"></div>
<div class="" style="left:215.0px;top:27.0px;width:1.0px;height:180.0px;background:#5f5f5f"></div>
<div class="" style="left:235.0px;top:27.0px;width:1.0px;height:180.0px;background:#5f5f5f"></div>
<div class="" style="left:256.0px;top:27.0px;width:1.0px;height:180.0px;background:#5f5f5f"></div>
<div class="" style="left:27.0px;top:47.0px;width:1.0px;height:153.0px;background:#333"></div>
<div class="" style="left:12.0px;top:37.0px;width:8.0px;height:1.0px;background:#333"></div>
<div class="" style="left:28.0px;top:97.0px;width:14.0px;height:1.0px;background:#333"></div>
<div class="" style="left:28.0px;top:117.0px;width:14.0px;height:1.0px;background:#333"></div>
<div class="" style="left:28.0px;top:137.0px;width:14.0px;height:1.0px;background:#333"></div>
<div class="" style="left:28.0px;top:157.0px;width:14.0px;height:1.0px;background:#333"></div>
<div class="" style="left:28.0px;top:177.0px;width:14.0px;height:1.0px;background:#333"></div>
<div class="" style="left:28.0px;top:197.0px;width:14.0px;height:1.0px;background:#333"></div>
<div class="" style="left:33.0px;top:57.0px;width:8.0px;height:1.0px;background:#333"></div>
<svg style="left:3.0px;top:32.0px" width="10" height="10" viewBox="0 0 10 10"><circle cx="5" cy="5" r="4.2" fill="#ddd" stroke="#000" stroke-width="1.1"/><rect x="2.6" y="4.4" width="4.8" height="1.3" fill="#000"/></svg>
<svg style="left:28.0px;top:52.0px" width="10" height="10" viewBox="0 0 10 10"><circle cx="5" cy="5" r="4.2" fill="#ddd" stroke="#000" stroke-width="1.1"/><rect x="2.6" y="4.4" width="4.8" height="1.3" fill="#000"/><rect x="4.4" y="2.6" width="1.3" height="4.8" fill="#000"/></svg>
<svg style="left:23.0px;top:92.0px" width="10" height="10" viewBox="0 0 10 10"><circle cx="5" cy="5" r="4.2" fill="#ddd" stroke="#000" stroke-width="1.1"/><rect x="2.6" y="4.4" width="4.8" height="1.3" fill="#000"/><rect x="4.4" y="2.6" width="1.3" height="4.8" fill="#000"/></svg>
<svg style="left:23.0px;top:112.0px" width="10" height="10" viewBox="0 0 10 10"><circle cx="5" cy="5" r="4.2" fill="#ddd" stroke="#000" stroke-width="1.1"/><rect x="2.6" y="4.4" width="4.8" height="1.3" fill="#000"/><rect x="4.4" y="2.6" width="1.3" height="4.8" fill="#000"/></svg>
<svg style="left:23.0px;top:132.0px" width="10" height="10" viewBox="0 0 10 10"><circle cx="5" cy="5" r="4.2" fill="#ddd" stroke="#000" stroke-width="1.1"/><rect x="2.6" y="4.4" width="4.8" height="1.3" fill="#000"/><rect x="4.4" y="2.6" width="1.3" height="4.8" fill="#000"/></svg>
<svg style="left:23.0px;top:152.0px" width="10" height="10" viewBox="0 0 10 10"><circle cx="5" cy="5" r="4.2" fill="#ddd" stroke="#000" stroke-width="1.1"/><rect x="2.6" y="4.4" width="4.8" height="1.3" fill="#000"/><rect x="4.4" y="2.6" width="1.3" height="4.8" fill="#000"/></svg>
<svg style="left:23.0px;top:172.0px" width="10" height="10" viewBox="0 0 10 10"><circle cx="5" cy="5" r="4.2" fill="#ddd" stroke="#000" stroke-width="1.1"/><rect x="2.6" y="4.4" width="4.8" height="1.3" fill="#000"/><rect x="4.4" y="2.6" width="1.3" height="4.8" fill="#000"/></svg>
<svg style="left:23.0px;top:192.0px" width="10" height="10" viewBox="0 0 10 10"><circle cx="5" cy="5" r="4.2" fill="#ddd" stroke="#000" stroke-width="1.1"/><rect x="2.6" y="4.4" width="4.8" height="1.3" fill="#000"/><rect x="4.4" y="2.6" width="1.3" height="4.8" fill="#000"/></svg>
<svg style="left:19.0px;top:28.0px" width="18" height="18" viewBox="0 0 18 18"><circle cx="9" cy="9" r="8.5" fill="#999" opacity=".6"/><circle cx="5" cy="4" r="1.8" fill="#e8e880"/><rect x="9" y="2" width="6" height="10" rx="2.5" fill="#5a8ad0" stroke="#000" stroke-width=".8"/><circle cx="8" cy="12" r="4" fill="#eee" stroke="#000" stroke-width=".9"/></svg>
<div class="t" style="left:41.0px;top:32.0px;">Scene</div>
<svg style="left:41.0px;top:49.0px" width="16" height="16" viewBox="0 0 16 16"><rect x="3" y="4" width="11" height="11" fill="#ccc" stroke="#333" stroke-width=".8"/><rect x="1" y="1" width="11" height="11" fill="#f0f0f0" stroke="#333" stroke-width=".8"/><rect x="3" y="3" width="7" height="6" fill="#4a7ac0"/><rect x="5" y="4" width="3" height="3" fill="#eee"/></svg>
<div class="t" style="left:61.0px;top:52.0px;">RenderLayers</div>
<div class="" style="left:139.0px;top:50.0px;width:1.0px;height:14.0px;background:#444"></div>
<svg style="left:148.0px;top:48.0px" width="18" height="18" viewBox="0 0 18 18"><circle cx="9" cy="9" r="8.5" fill="#999" opacity=".6"/><g transform="translate(1,1)"><rect x="3" y="4" width="11" height="11" fill="#ccc" stroke="#333" stroke-width=".8"/><rect x="1" y="1" width="11" height="11" fill="#f0f0f0" stroke="#333" stroke-width=".8"/><rect x="3" y="3" width="7" height="6" fill="#4a7ac0"/><rect x="5" y="4" width="3" height="3" fill="#eee"/></g></svg>
<svg style="left:40.0px;top:69.0px" width="17" height="17" viewBox="0 0 17 17"><circle cx="8.5" cy="8.5" r="8" fill="#aab"/><circle cx="8.5" cy="8.5" r="6.5" fill="#3a6ab8" stroke="#222" stroke-width=".6"/><path d="M4,6 C6,4 8,5 9,7 C8,9 6,8 5,10Z M10,10 C12,9 13,11 12,13 C10,13 10,12 10,10Z M9,3 C11,3 12,4 13,6 C11,6 10,5 9,3Z" fill="#5aa040"/></svg>
<div class="t" style="left:61.0px;top:72.0px;">World</div>
<svg style="left:42.0px;top:89.0px" width="14" height="16" viewBox="0 0 14 16"><circle cx="7" cy="3" r="2" fill="none" stroke="#f0a050" stroke-width="1.4"/><path d="M7,5 L7,9 M2,6.5 L12,6.5 M7,9 L3.5,14 M7,9 L10.5,14" stroke="#f0a050" stroke-width="1.6" fill="none"/></svg>
<div class="t" style="left:61.0px;top:92.0px;">Armature</div>
<div class="" style="left:117.0px;top:90.0px;width:1.0px;height:14.0px;background:#444"></div>
<svg style="left:128.0px;top:89.0px" width="16" height="16" viewBox="0 0 16 16"><path d="M3,14 L1,11.5 L3,9 M1.5,11.5 L8,11.5 C12,11.5 12,7 8,7 C5,7 5,3 8,3 L11,3" stroke="#000" stroke-width="2.8" fill="none"/><path d="M3,14 L1,11.5 L3,9 M1.5,11.5 L8,11.5 C12,11.5 12,7 8,7 C5,7 5,3 8,3 L11,3" stroke="#fff" stroke-width="1.2" fill="none"/></svg>
<svg style="left:147.0px;top:88.0px" width="18" height="18" viewBox="0 0 18 18"><circle cx="9" cy="9" r="8.5" fill="#999" opacity=".6"/><g transform="translate(2,1) scale(1)"><circle cx="7" cy="3" r="2" fill="none" stroke="#fff" stroke-width="1.4"/><path d="M7,5 L7,9 M2,6.5 L12,6.5 M7,9 L3.5,14 M7,9 L10.5,14" stroke="#fff" stroke-width="1.8" fill="none"/></g></svg>
<svg style="left:169.0px;top:89.0px" width="16" height="16" viewBox="0 0 16 16"><circle cx="7" cy="3" r="2" fill="none" stroke="#9a9a9a" stroke-width="1.4"/><path d="M7,5 L7,9 M2,6.5 L12,6.5 M7,9 L3.5,14 M7,9 L10.5,14" stroke="#9a9a9a" stroke-width="1.6" fill="none"/></svg>
<svg style="left:188.0px;top:89.0px" width="16" height="16" viewBox="0 0 16 16"><path d="M2,3 L12,3 L7,13Z" fill="none" stroke="#f0a050" stroke-width="1.8"/><circle cx="2" cy="3" r="1.3" fill="#f0c080"/><circle cx="12" cy="3" r="1.3" fill="#f0c080"/><circle cx="7" cy="13" r="1.3" fill="#f0c080"/></svg>
<svg style="left:205.0px;top:88.0px" width="18" height="18" viewBox="0 0 18 18"><circle cx="9" cy="9" r="8.5" fill="#999" opacity=".6"/></svg>
<svg style="left:42.0px;top:109.0px" width="16" height="16" viewBox="0 0 16 16"><circle cx="4.5" cy="4" r="3" fill="#f0a050" stroke="#6a3000" stroke-width=".7"/><circle cx="10" cy="4" r="3" fill="#f0a050" stroke="#6a3000" stroke-width=".7"/><rect x="2" y="7" width="10" height="6" fill="#f0a050" stroke="#6a3000" stroke-width=".7"/><path d="M12,9 L15,7 L15,13 L12,11Z" fill="#f0a050" stroke="#6a3000" stroke-width=".7"/></svg>
<div class="t" style="left:61.0px;top:112.0px;">Camera</div>
<div class="" style="left:117.0px;top:110.0px;width:1.0px;height:14.0px;background:#444"></div>
<svg style="left:121.0px;top:109.0px" width="16" height="16" viewBox="0 0 16 16"><path d="M3,14 L1,11.5 L3,9 M1.5,11.5 L8,11.5 C12,11.5 12,7 8,7 C5,7 5,3 8,3 L11,3" stroke="#000" stroke-width="2.8" fill="none"/><path d="M3,14 L1,11.5 L3,9 M1.5,11.5 L8,11.5 C12,11.5 12,7 8,7 C5,7 5,3 8,3 L11,3" stroke="#fff" stroke-width="1.2" fill="none"/></svg>
<svg style="left:139.0px;top:108.0px" width="18" height="18" viewBox="0 0 18 18"><circle cx="9" cy="9" r="8.5" fill="#999" opacity=".6"/><circle cx="6" cy="6" r="2.5" fill="none" stroke="#bbb" stroke-width="1.2"/><circle cx="11" cy="6" r="2.5" fill="none" stroke="#bbb" stroke-width="1.2"/><rect x="4" y="9" width="9" height="5" fill="none" stroke="#bbb" stroke-width="1.2"/></svg>
<svg style="left:42.0px;top:129.0px" width="14" height="16" viewBox="0 0 14 16"><path d="M2,3 L12,3 L7,13Z" fill="none" stroke="#f0a050" stroke-width="1.8"/><circle cx="2" cy="3" r="1.3" fill="#fff"/><circle cx="12" cy="3" r="1.3" fill="#fff"/><circle cx="7" cy="13" r="1.3" fill="#fff"/></svg>
<div class="t" style="left:61.0px;top:132.0px;">Cuerpo.001</div>
<div class="" style="left:135.0px;top:130.0px;width:1.0px;height:14.0px;background:#444"></div>
<svg style="left:144.0px;top:129.0px" width="14" height="16" viewBox="0 0 14 16"><path d="M2,3 L12,3 L7,13Z" fill="none" stroke="#9a9a9a" stroke-width="1.2"/><circle cx="2" cy="3" r="1.1" fill="#ccc"/><circle cx="12" cy="3" r="1.1" fill="#ccc"/><circle cx="7" cy="13" r="1.1" fill="#ccc"/></svg>
<svg style="left:161.0px;top:129.0px" width="16" height="16" viewBox="0 0 16 16"><path d="M2,14 L8,8" stroke="#000" stroke-width="3.4"/><path d="M2,14 L8,8" stroke="#6a9ae0" stroke-width="2"/><path d="M7,6 A4,4 0 1,1 10,9 L12,7 L13,3 L11,5 L9.5,4.5 L9,3 L11,1" fill="none" stroke="#000" stroke-width="1"/><circle cx="10.5" cy="5.5" r="3.5" fill="#6a9ae0" stroke="#000" stroke-width=".9"/><path d="M10,2 L13,2 L13,5Z" fill="#727272"/></svg>
<svg style="left:42.0px;top:149.0px" width="14" height="16" viewBox="0 0 14 16"><path d="M2,3 L12,3 L7,13Z" fill="none" stroke="#f0a050" stroke-width="1.8"/><circle cx="2" cy="3" r="1.3" fill="#fff"/><circle cx="12" cy="3" r="1.3" fill="#fff"/><circle cx="7" cy="13" r="1.3" fill="#fff"/></svg>
<div class="t" style="left:61.0px;top:152.0px;">Pantuflas</div>
<div class="" style="left:125.0px;top:150.0px;width:1.0px;height:14.0px;background:#444"></div>
<svg style="left:134.0px;top:149.0px" width="14" height="16" viewBox="0 0 14 16"><path d="M2,3 L12,3 L7,13Z" fill="none" stroke="#9a9a9a" stroke-width="1.2"/><circle cx="2" cy="3" r="1.1" fill="#ccc"/><circle cx="12" cy="3" r="1.1" fill="#ccc"/><circle cx="7" cy="13" r="1.1" fill="#ccc"/></svg>
<svg style="left:151.0px;top:149.0px" width="16" height="16" viewBox="0 0 16 16"><path d="M2,14 L8,8" stroke="#000" stroke-width="3.4"/><path d="M2,14 L8,8" stroke="#6a9ae0" stroke-width="2"/><path d="M7,6 A4,4 0 1,1 10,9 L12,7 L13,3 L11,5 L9.5,4.5 L9,3 L11,1" fill="none" stroke="#000" stroke-width="1"/><circle cx="10.5" cy="5.5" r="3.5" fill="#6a9ae0" stroke="#000" stroke-width=".9"/><path d="M10,2 L13,2 L13,5Z" fill="#727272"/></svg>
<svg style="left:42.0px;top:169.0px" width="14" height="16" viewBox="0 0 14 16"><path d="M2,3 L12,3 L7,13Z" fill="none" stroke="#f0a050" stroke-width="1.8"/><circle cx="2" cy="3" r="1.3" fill="#fff"/><circle cx="12" cy="3" r="1.3" fill="#fff"/><circle cx="7" cy="13" r="1.3" fill="#fff"/></svg>
<div class="t" style="left:61.0px;top:172.0px;">Plane.001</div>
<div class="" style="left:129.0px;top:170.0px;width:1.0px;height:14.0px;background:#444"></div>
<svg style="left:138.0px;top:169.0px" width="14" height="16" viewBox="0 0 14 16"><path d="M2,3 L12,3 L7,13Z" fill="none" stroke="#9a9a9a" stroke-width="1.2"/><circle cx="2" cy="3" r="1.1" fill="#ccc"/><circle cx="12" cy="3" r="1.1" fill="#ccc"/><circle cx="7" cy="13" r="1.1" fill="#ccc"/></svg>
<svg style="left:42.0px;top:189.0px" width="14" height="17" viewBox="0 0 14 17"><circle cx="7" cy="6" r="4.8" fill="#f0b060" stroke="#5a3000" stroke-width=".8"/><rect x="4.5" y="10" width="5" height="5" fill="#eee" stroke="#333" stroke-width=".7"/><path d="M5,5 L7,7 L9,5" stroke="#fff" stroke-width=".8" fill="none"/></svg>
<div class="t" style="left:61.0px;top:192.0px;">Point</div>
<div class="" style="left:97.0px;top:190.0px;width:1.0px;height:14.0px;background:#444"></div>
<svg style="left:105.0px;top:189.0px" width="16" height="16" viewBox="0 0 16 16"><path d="M3,14 L1,11.5 L3,9 M1.5,11.5 L8,11.5 C12,11.5 12,7 8,7 C5,7 5,3 8,3 L11,3" stroke="#000" stroke-width="2.8" fill="none"/><path d="M3,14 L1,11.5 L3,9 M1.5,11.5 L8,11.5 C12,11.5 12,7 8,7 C5,7 5,3 8,3 L11,3" stroke="#fff" stroke-width="1.2" fill="none"/></svg>
<svg style="left:128.0px;top:189.0px" width="16" height="16" viewBox="0 0 16 16"><circle cx="8" cy="8" r="2.5" fill="#c8c890"/><path d="M1,1 L4,4 M15,1 L12,4 M1,15 L4,12 M15,15 L12,12 M1,1 L1,4 M1,1 L4,1 M15,1 L15,4 M15,1 L12,1 M1,15 L1,12 M1,15 L4,15 M15,15 L15,12 M15,15 L12,15" stroke="#c8c890" stroke-width="1.2"/></svg>
<svg style="left:217.0px;top:90.0px" width="16" height="14" viewBox="0 0 16 14"><path d="M1,7 C4,2 12,2 15,7 C12,12 4,12 1,7Z" fill="#fff" stroke="#111" stroke-width=".9"/><circle cx="8" cy="7" r="2.8" fill="#444"/><circle cx="7" cy="6" r=".9" fill="#fff"/></svg>
<svg style="left:238.0px;top:89.0px" width="14" height="16" viewBox="0 0 14 16"><path d="M3,1 L3,13 L6,10 L8.5,15 L10,14 L7.5,9 L11.5,9Z" fill="#fff" stroke="#111" stroke-width="1"/></svg>
<svg style="left:258.0px;top:89.0px" width="15" height="15" viewBox="0 0 15 15"><rect x="1" y="3.5" width="13" height="10" fill="#ccc" stroke="#111" stroke-width="1"/><rect x="2" y="1.5" width="4" height="2" fill="#111"/><circle cx="7.5" cy="8.5" r="3.3" fill="#555" stroke="#111" stroke-width=".8"/><circle cx="7.5" cy="8.5" r="1.3" fill="#c04050"/></svg>
<svg style="left:217.0px;top:110.0px" width="16" height="14" viewBox="0 0 16 14"><path d="M1,7 C4,2 12,2 15,7 C12,12 4,12 1,7Z" fill="#fff" stroke="#111" stroke-width=".9"/><circle cx="8" cy="7" r="2.8" fill="#444"/><circle cx="7" cy="6" r=".9" fill="#fff"/></svg>
<svg style="left:238.0px;top:109.0px" width="14" height="16" viewBox="0 0 14 16"><path d="M3,1 L3,13 L6,10 L8.5,15 L10,14 L7.5,9 L11.5,9Z" fill="#fff" stroke="#111" stroke-width="1"/></svg>
<svg style="left:258.0px;top:109.0px" width="15" height="15" viewBox="0 0 15 15"><rect x="1" y="3.5" width="13" height="10" fill="#ccc" stroke="#111" stroke-width="1"/><rect x="2" y="1.5" width="4" height="2" fill="#111"/><circle cx="7.5" cy="8.5" r="3.3" fill="#555" stroke="#111" stroke-width=".8"/><circle cx="7.5" cy="8.5" r="1.3" fill="#c04050"/></svg>
<svg style="left:217.0px;top:130.0px" width="16" height="14" viewBox="0 0 16 14"><path d="M1,7 C4,2 12,2 15,7 C12,12 4,12 1,7Z" fill="#fff" stroke="#111" stroke-width=".9"/><circle cx="8" cy="7" r="2.8" fill="#444"/><circle cx="7" cy="6" r=".9" fill="#fff"/></svg>
<svg style="left:238.0px;top:129.0px" width="14" height="16" viewBox="0 0 14 16"><path d="M3,1 L3,13 L6,10 L8.5,15 L10,14 L7.5,9 L11.5,9Z" fill="#fff" stroke="#111" stroke-width="1"/></svg>
<svg style="left:258.0px;top:129.0px" width="15" height="15" viewBox="0 0 15 15"><rect x="1" y="3.5" width="13" height="10" fill="#ccc" stroke="#111" stroke-width="1"/><rect x="2" y="1.5" width="4" height="2" fill="#111"/><circle cx="7.5" cy="8.5" r="3.3" fill="#555" stroke="#111" stroke-width=".8"/><circle cx="7.5" cy="8.5" r="1.3" fill="#c04050"/></svg>
<svg style="left:217.0px;top:150.0px" width="16" height="14" viewBox="0 0 16 14"><path d="M1,7 C4,2 12,2 15,7 C12,12 4,12 1,7Z" fill="#fff" stroke="#111" stroke-width=".9"/><circle cx="8" cy="7" r="2.8" fill="#444"/><circle cx="7" cy="6" r=".9" fill="#fff"/></svg>
<svg style="left:238.0px;top:149.0px" width="14" height="16" viewBox="0 0 14 16"><path d="M3,1 L3,13 L6,10 L8.5,15 L10,14 L7.5,9 L11.5,9Z" fill="#fff" stroke="#111" stroke-width="1"/></svg>
<svg style="left:258.0px;top:149.0px" width="15" height="15" viewBox="0 0 15 15"><rect x="1" y="3.5" width="13" height="10" fill="#ccc" stroke="#111" stroke-width="1"/><rect x="2" y="1.5" width="4" height="2" fill="#111"/><circle cx="7.5" cy="8.5" r="3.3" fill="#555" stroke="#111" stroke-width=".8"/><circle cx="7.5" cy="8.5" r="1.3" fill="#c04050"/></svg>
<svg style="left:217.0px;top:170.0px" width="16" height="14" viewBox="0 0 16 14"><path d="M1,7 C4,2 12,2 15,7 C12,12 4,12 1,7Z" fill="#fff" stroke="#111" stroke-width=".9"/><circle cx="8" cy="7" r="2.8" fill="#444"/><circle cx="7" cy="6" r=".9" fill="#fff"/></svg>
<svg style="left:238.0px;top:169.0px" width="14" height="16" viewBox="0 0 14 16"><path d="M3,1 L3,13 L6,10 L8.5,15 L10,14 L7.5,9 L11.5,9Z" fill="#fff" stroke="#111" stroke-width="1"/></svg>
<svg style="left:258.0px;top:169.0px" width="15" height="15" viewBox="0 0 15 15"><rect x="1" y="3.5" width="13" height="10" fill="#ccc" stroke="#111" stroke-width="1"/><rect x="2" y="1.5" width="4" height="2" fill="#111"/><circle cx="7.5" cy="8.5" r="3.3" fill="#555" stroke="#111" stroke-width=".8"/><circle cx="7.5" cy="8.5" r="1.3" fill="#c04050"/></svg>
<svg style="left:217.0px;top:190.0px" width="16" height="14" viewBox="0 0 16 14"><path d="M1,7 C4,2 12,2 15,7 C12,12 4,12 1,7Z" fill="#fff" stroke="#111" stroke-width=".9"/><circle cx="8" cy="7" r="2.8" fill="#444"/><circle cx="7" cy="6" r=".9" fill="#fff"/></svg>
<svg style="left:238.0px;top:189.0px" width="14" height="16" viewBox="0 0 14 16"><path d="M3,1 L3,13 L6,10 L8.5,15 L10,14 L7.5,9 L11.5,9Z" fill="#fff" stroke="#111" stroke-width="1"/></svg>
<svg style="left:258.0px;top:189.0px" width="15" height="15" viewBox="0 0 15 15"><rect x="1" y="3.5" width="13" height="10" fill="#ccc" stroke="#111" stroke-width="1"/><rect x="2" y="1.5" width="4" height="2" fill="#111"/><circle cx="7.5" cy="8.5" r="3.3" fill="#555" stroke="#111" stroke-width=".8"/><circle cx="7.5" cy="8.5" r="1.3" fill="#c04050"/></svg>
<div class="" style="left:275.0px;top:31.0px;width:13.0px;height:175.0px;background:#656565;border:1px solid #3a3a3a;border-radius:6px"></div>
<div class="" style="left:275.0px;top:31.0px;width:13.0px;height:136.0px;background:linear-gradient(90deg,#7e7e7e,#9c9c9c 60%,#8a8a8a);border:1px solid #3a3a3a;border-radius:6px"></div>
<div class="" style="left:0.0px;top:209.0px;width:291.0px;height:14.0px;background:#727272"></div>
<div class="" style="left:4.0px;top:209.0px;width:280.0px;height:13.0px;background:#656565;border:1px solid #3a3a3a;border-radius:6px"></div>
<div class="" style="left:4.0px;top:209.0px;width:269.0px;height:13.0px;background:linear-gradient(#8c8c8c,#a4a4a4);border:1px solid #3a3a3a;border-radius:6px"></div>
<svg style="left:0.0px;top:209.0px" width="14" height="13" viewBox="0 0 12 11"><path d="M0,1 L10,11 M0,4 L7,11 M0,7 L4,11" stroke="#c8c8c8" stroke-width="1"/><path d="M0,2 L9,11 M0,5 L6,11 M0,8 L3,11" stroke="#3a3a3a" stroke-width="1"/></svg>
<div class="" style="left:0.0px;top:222.0px;width:291.0px;height:1.0px;background:#000"></div>
<div class="" style="left:0.0px;top:223.0px;width:291.0px;height:26.0px;background:#727272"></div>
<div class="" style="left:0.0px;top:248.0px;width:291.0px;height:1.0px;background:#8a8a8a"></div>
<svg style="left:277.0px;top:223.0px" width="14" height="12" viewBox="0 0 14 12"><path d="M2,0 L14,12 M6,0 L14,8 M10,0 L14,4" stroke="#c8c8c8" stroke-width="1"/><path d="M3,0 L14,11 M7,0 L14,7 M11,0 L14,3" stroke="#3a3a3a" stroke-width="1"/></svg>
<div class="dk" style="left:9.0px;top:226.0px;width:30.0px;height:20.0px;"></div>
<svg style="left:12.0px;top:229.0px" width="26" height="14" viewBox="0 0 26 14"><rect x="1" y="1" width="12" height="5" rx="2" fill="#555" stroke="#eee" stroke-width="1"/><rect x="7" y="1.5" width="5.5" height="4" rx="1.5" fill="#eee"/><rect x="1" y="8" width="12" height="5" rx="2" fill="#eee" stroke="#eee"/><path d="M3,10.5 L4.5,9 L4.5,12Z M11,10.5 L9.5,9 L9.5,12Z" fill="#333"/><g transform="translate(14,0)"><path d="M5,1 L7.5,5.5 L2.5,5.5Z M2.5,7.5 L7.5,7.5 L5,12Z" fill="#9a9a9a"/></g></svg>
<div class="dk" style="left:45.0px;top:226.0px;width:221.0px;height:20.0px;border-radius:5px 0 0 5px"></div>
<div class="" style="left:67.0px;top:227.0px;width:1.0px;height:18.0px;background:#2a2a2a"></div>
<div class="" style="left:89.0px;top:227.0px;width:1.0px;height:18.0px;background:#2a2a2a"></div>
<div class="" style="left:111.0px;top:227.0px;width:1.0px;height:18.0px;background:#2a2a2a"></div>
<div class="" style="left:133.0px;top:227.0px;width:1.0px;height:18.0px;background:#2a2a2a"></div>
<div class="" style="left:155.0px;top:227.0px;width:1.0px;height:18.0px;background:#2a2a2a"></div>
<div class="" style="left:177.0px;top:227.0px;width:1.0px;height:18.0px;background:#2a2a2a"></div>
<div class="" style="left:199.0px;top:227.0px;width:1.0px;height:18.0px;background:#2a2a2a"></div>
<div class="" style="left:221.0px;top:227.0px;width:1.0px;height:18.0px;background:#2a2a2a"></div>
<div class="" style="left:243.0px;top:227.0px;width:1.0px;height:18.0px;background:#2a2a2a"></div>
<div class="" style="left:265.0px;top:226.0px;width:22.0px;height:20.0px;background:linear-gradient(#6a9ae8,#4a7ad0);border:1px solid #2a2a2a;border-radius:0 5px 5px 0"></div>
<svg style="left:47.0px;top:228.0px" width="17" height="17" viewBox="0 0 17 17"><rect x="2" y="4" width="13" height="10" fill="#555" stroke="#aaa" stroke-width="1"/><rect x="3" y="2" width="4" height="2" fill="#aaa"/><circle cx="9" cy="9" r="3" fill="#333" stroke="#aaa" stroke-width="1"/></svg>
<svg style="left:69.0px;top:228.0px" width="17" height="17" viewBox="0 0 17 17"><circle cx="4" cy="3" r="1.8" fill="#e8e880" opacity=".7"/><rect x="9" y="3" width="5" height="9" rx="2" fill="#5a80b8"/><circle cx="7" cy="12" r="3.2" fill="#aaa"/></svg>
<svg style="left:91.0px;top:228.0px" width="17" height="17" viewBox="0 0 17 17"><circle cx="8.5" cy="8.5" r="6.5" fill="#3a6ab8"/><path d="M4,6 C6,4 8,5 9,7 C8,9 6,8 5,10Z M10,10 C12,9 13,11 12,13 C10,13 10,12 10,10Z" fill="#5a9a50"/></svg>
<svg style="left:113.0px;top:228.0px" width="17" height="17" viewBox="0 0 17 17"><path d="M2,4.5 L8.5,2 L15,4.5 L15,12 L8.5,15 L2,12Z" fill="#c89050"/><path d="M2,4.5 L8.5,7 L15,4.5 L8.5,2Z" fill="#e8b070"/><path d="M8.5,7 L15,4.5 L15,12 L8.5,15Z" fill="#a87030"/></svg>
<svg style="left:135.0px;top:228.0px" width="17" height="17" viewBox="0 0 17 17"><path d="M3,9 L6,6 C7,5 9,5 10,6 C11,7 11,9 10,10 L8,12 M8,8 L11,5 C12,4 14,4 15,5 C16,6 16,8 15,9 L12,12" stroke="#aaa" stroke-width="1.4" fill="none" transform="translate(-1,0)"/></svg>
<svg style="left:157.0px;top:228.0px" width="17" height="17" viewBox="0 0 17 17"><path d="M2,14 L8,8" stroke="#6a9ae0" stroke-width="2.2"/><circle cx="10.5" cy="5.5" r="3.5" fill="#6a9ae0"/><path d="M10,1.5 L14,1.5 L14,5.5Z" fill="#3c3c3c"/></svg>
<svg style="left:179.0px;top:228.0px" width="17" height="17" viewBox="0 0 17 17"><path d="M3,3 L14,3 L8.5,14Z" fill="none" stroke="#aaa" stroke-width="1.2"/><circle cx="3" cy="3" r="1.3" fill="#ddd"/><circle cx="14" cy="3" r="1.3" fill="#ddd"/><circle cx="8.5" cy="14" r="1.3" fill="#ddd"/></svg>
<svg style="left:201.0px;top:228.0px" width="17" height="17" viewBox="0 0 17 17"><circle cx="8.5" cy="8.5" r="6.5" fill="#7a5a50"/><path d="M8.5,2 A6.5,6.5 0 0,1 15,8.5 L8.5,8.5Z" fill="#bba"/><path d="M8.5,8.5 L8.5,15 A6.5,6.5 0 0,1 2,8.5Z" fill="#bba"/></svg>
<svg style="left:223.0px;top:228.0px" width="17" height="17" viewBox="0 0 17 17"><rect x="2" y="2" width="13" height="13" fill="#ddd"/><path d="M2,2 h3v3h-3z M8,2 h3v3h-3z M5,5 h3v3h-3z M11,5 h3v3h-3z M2,8 h3v3h-3z M8,8 h3v3h-3z M5,11 h3v3h-3z M11,11 h3v3h-3z" fill="#a04040"/></svg>
<svg style="left:245.0px;top:228.0px" width="17" height="17" viewBox="0 0 17 17"><path d="M5,1 L5,9 M1,5 L9,5 M12,6 L12,14 M8,10 L16,10 M4,11 L4,16 M1.5,13.5 L6.5,13.5 M12,1 L12,4 M10.5,2.5 L13.5,2.5" stroke="#d8c880" stroke-width="1.2"/></svg>
<svg style="left:267.0px;top:227.0px" width="18" height="18" viewBox="0 0 18 18"><path d="M3,9 L8,14 L15,5" stroke="#224" stroke-width="2.6" fill="none"/><path d="M3,9 L8,14 L15,5" stroke="#8ab8f0" stroke-width="1.2" fill="none"/><circle cx="12" cy="5" r="3.2" fill="#eee" stroke="#333" stroke-width=".7"/></svg>
<svg style="left:8.0px;top:258.0px" width="18" height="18" viewBox="0 0 18 18"><path d="M1,17 L7,11" stroke="#111" stroke-width="2.2"/><path d="M1,17 L7,11" stroke="#ddd" stroke-width="1"/><path d="M5,8 L10,13 L11,10 L15,6 L16,7 L17,5 L13,1 L11,2 L12,3 L8,7Z" fill="#e8e8e8" stroke="#111" stroke-width=".9"/></svg>
<svg style="left:33.0px;top:258.0px" width="16" height="16" viewBox="0 0 16 16"><circle cx="3.5" cy="3" r="2" fill="#e8e880" opacity=".7"/><rect x="8" y="2.5" width="5.5" height="9" rx="2.5" fill="#5a8ad0" stroke="#000" stroke-width=".7"/><circle cx="6" cy="12" r="3.5" fill="#eee" stroke="#000" stroke-width=".8"/></svg>
<svg style="left:53.0px;top:264.0px" width="6" height="8" viewBox="0 0 6 8"><path d="M1,0 L5,4 L1,8Z" fill="#3a3a3a"/></svg>
<svg style="left:73.0px;top:259.0px" width="15" height="15" viewBox="0 0 15 15"><path d="M1.5,4 L7.5,1.5 L13.5,4 L13.5,11 L7.5,13.5 L1.5,11Z" fill="#f0a040" stroke="#4a2a00" stroke-width=".8"/><path d="M1.5,4 L7.5,6.5 L13.5,4 L7.5,1.5Z" fill="#fad898"/><path d="M7.5,6.5 L13.5,4 L13.5,11 L7.5,13.5Z" fill="#c87a20"/></svg>
<div class="t" style="left:89.0px;top:262.0px;">Cuerpo</div>
<div class="t" style="left:13.0px;top:298.0px;">Enable physics for:</div>
<div class="btn" style="left:8.0px;top:318.0px;width:125.0px;height:20.0px;"></div>
<div class="t c" style="left:26.0px;top:322.0px;width:107.0px">Force Field</div>
<svg style="left:10.0px;top:320.0px" width="16" height="16" viewBox="0 0 16 16"><circle cx="8" cy="8" r="6.5" fill="none" stroke="#ddd" stroke-width="1.2" stroke-dasharray="2.5 1.5"/><circle cx="8" cy="8" r="3" fill="#e04020" stroke="#fff" stroke-width=".8"/></svg>
<div class="btn" style="left:141.0px;top:318.0px;width:126.0px;height:20.0px;"></div>
<div class="t c" style="left:159.0px;top:322.0px;width:108.0px">Soft Body</div>
<svg style="left:143.0px;top:320.0px" width="16" height="16" viewBox="0 0 16 16"><path d="M2,5 L6,2 L12,4 L8,7 L12,9 L6,14 L4,13 L8,9 L4,6Z" fill="#6a9ae0" stroke="#1a3a80" stroke-width=".8"/></svg>
<div class="btn" style="left:8.0px;top:340.0px;width:125.0px;height:20.0px;"></div>
<div class="t c" style="left:26.0px;top:344.0px;width:107.0px">Collision</div>
<svg style="left:10.0px;top:342.0px" width="16" height="16" viewBox="0 0 16 16"><path d="M3,3 L13,13 M13,3 L3,13" stroke="#000" stroke-width="3.2"/><path d="M3,3 L13,13 M13,3 L3,13" stroke="#fff" stroke-width="1.6"/></svg>
<div class="btn" style="left:141.0px;top:340.0px;width:126.0px;height:20.0px;"></div>
<div class="t c" style="left:159.0px;top:344.0px;width:108.0px">Fluid</div>
<svg style="left:143.0px;top:342.0px" width="16" height="16" viewBox="0 0 16 16"><path d="M8,1 C10,5 13,8 13,11 C13,14 10,15 8,15 C6,15 3,14 3,11 C3,8 6,5 8,1Z" fill="#6a9ae0" stroke="#1a3a80" stroke-width=".8"/><path d="M5,10 C5,12 6,13 7,13" stroke="#fff" stroke-width="1" fill="none"/></svg>
<div class="btn" style="left:8.0px;top:362.0px;width:125.0px;height:20.0px;"></div>
<div class="t c" style="left:26.0px;top:366.0px;width:107.0px">Cloth</div>
<svg style="left:10.0px;top:364.0px" width="16" height="16" viewBox="0 0 16 16"><path d="M1,3 L5,1 L11,1 L15,3 L14,7 L12,6 L12,15 L4,15 L4,6 L2,7Z" fill="#6a9ae0" stroke="#1a3a80" stroke-width=".8"/><path d="M7,6 L8,5 L8,11" stroke="#fff" stroke-width="1"/></svg>
<div class="btn" style="left:141.0px;top:362.0px;width:126.0px;height:20.0px;"></div>
<div class="t c" style="left:159.0px;top:366.0px;width:108.0px">Smoke</div>
<svg style="left:143.0px;top:364.0px" width="16" height="16" viewBox="0 0 16 16"><circle cx="5" cy="4" r="2.5" fill="#ccd" stroke="#334" stroke-width=".6"/><path d="M2,8 L8,8 L8,11 L15,7 L15,10 L8,15 L3,15 C1,13 1,10 2,8Z" fill="#6a9ae0" stroke="#1a3a80" stroke-width=".8"/></svg>
<div class="btn" style="left:8.0px;top:384.0px;width:125.0px;height:20.0px;"></div>
<div class="t c" style="left:26.0px;top:388.0px;width:107.0px">Dynamic Paint</div>
<svg style="left:10.0px;top:386.0px" width="16" height="16" viewBox="0 0 16 16"><path d="M2,5 C4,1 10,1 12,3 C15,4 15,9 13,11 C12,14 6,15 4,13 C1,12 1,7 2,5Z" fill="#8ab8f0" stroke="#1a3a80" stroke-width=".8"/><path d="M4,5 C6,4 9,6 11,5 M4,9 C6,8 9,10 12,9" stroke="#fff" stroke-width="1" fill="none"/></svg>
<div class="" style="left:5.0px;top:411.0px;width:266.0px;height:1.0px;background:#3c3c3c"></div>
<div class="" style="left:5.0px;top:412.0px;width:266.0px;height:1.0px;background:#858585"></div>
<svg style="left:13.0px;top:419.0px" width="9" height="9" viewBox="0 0 9 9"><path d="M0,1 L9,1 L4.5,9Z" fill="#000"/></svg>
<div class="t" style="left:25.0px;top:419.0px;font-size:12px">Collision</div>
<svg style="left:248.0px;top:415.0px" width="18" height="17" viewBox="0 0 18 17"><path d="M4,1 L17,14 M9,1 L17,9 M4,3 L15,14 M9,3 L15,9" stroke="#8a8a8a" stroke-width="1"/><path d="M5,1 L17,13 M10,1 L17,8" stroke="#5a5a5a" stroke-width="1"/></svg>
<div class="t" style="left:13.0px;top:454.0px;">Particle:</div>
<div class="t" style="left:146.0px;top:454.0px;">Soft Body and Cloth:</div>
<div class="num" style="left:8.0px;top:471.0px;width:125.0px;height:20.0px;border-radius:10px;"><div style="left:0;top:0;width:20px;height:20px;background:linear-gradient(#8a8a8a,#7a7a7a)"></div></div>
<div class="t c" style="left:8.0px;top:476.0px;width:125.0px">Permeability: 0.100</div>
<div class="num" style="left:8.0px;top:493.0px;width:125.0px;height:20.0px;border-radius:10px;"><div style="left:0;top:0;width:0px;height:20px;background:linear-gradient(#8a8a8a,#7a7a7a)"></div></div>
<div class="t c" style="left:8.0px;top:498.0px;width:125.0px">Stickiness: 0.000</div>
<svg style="left:16.0px;top:498.0px" width="116" height="10" viewBox="0 0 116 10"><path d="M5,1 L1,5 L5,9Z M110,1 L114,5 L110,9Z" fill="#8a8a8a"/></svg>
<div class="num" style="left:141.0px;top:471.0px;width:126.0px;height:20.0px;border-radius:10px 10px 0 0;"><div style="left:0;top:0;width:14px;height:20px;background:linear-gradient(#8a8a8a,#7a7a7a)"></div></div>
<div class="t c" style="left:141.0px;top:476.0px;width:126.0px">Outer: 0.050</div>
<div class="num" style="left:141.0px;top:490.0px;width:126.0px;height:20.0px;border-radius:0 0 10px 10px;"><div style="left:0;top:0;width:14px;height:20px;background:linear-gradient(#8a8a8a,#7a7a7a)"></div></div>
<div class="t c" style="left:141.0px;top:495.0px;width:126.0px">Inner: 0.050</div>
<div class="" style="left:12.0px;top:518.0px;width:13.0px;height:13.0px;background:linear-gradient(#3a3a3a,#4e4e4e);border:1px solid #222;border-radius:3px"></div>
<div class="t" style="left:30.0px;top:520.0px;">Kill Particles</div>
<div class="t" style="left:146.0px;top:518.0px;">Soft Body Damping:</div>
<div class="num" style="left:141.0px;top:535.0px;width:126.0px;height:20.0px;border-radius:10px;"><div style="left:0;top:0;width:19px;height:20px;background:linear-gradient(#8a8a8a,#7a7a7a)"></div></div>
<div class="t c" style="left:141.0px;top:540.0px;width:126.0px">Factor: 0.100</div>
<div class="t" style="left:13.0px;top:542.0px;">Particle Damping:</div>
<div class="t" style="left:146.0px;top:562.0px;">Force Fields:</div>
<div class="num" style="left:8.0px;top:559.0px;width:125.0px;height:20.0px;border-radius:10px 10px 0 0;"><div style="left:0;top:0;width:10px;height:20px;background:linear-gradient(#8a8a8a,#7a7a7a)"></div></div>
<div class="t c" style="left:8.0px;top:564.0px;width:125.0px">Factor: 0.000</div>
<div class="num" style="left:8.0px;top:578.0px;width:125.0px;height:20.0px;border-radius:0 0 10px 10px;"><div style="left:0;top:0;width:11px;height:20px;background:linear-gradient(#8a8a8a,#7a7a7a)"></div></div>
<div class="t c" style="left:8.0px;top:583.0px;width:125.0px">Random: 0.000</div>
<div class="num" style="left:141.0px;top:579.0px;width:126.0px;height:20.0px;border-radius:10px;"><div style="left:0;top:0;width:10px;height:20px;background:linear-gradient(#8a8a8a,#7a7a7a)"></div></div>
<div class="t c" style="left:141.0px;top:584.0px;width:126.0px">Absorption: 0.00</div>
<div class="t" style="left:13.0px;top:606.0px;">Particle Friction:</div>
<div class="num" style="left:8.0px;top:623.0px;width:125.0px;height:20.0px;border-radius:10px 10px 0 0;"><div style="left:0;top:0;width:10px;height:20px;background:linear-gradient(#8a8a8a,#7a7a7a)"></div></div>
<div class="t c" style="left:8.0px;top:628.0px;width:125.0px">Factor: 0.000</div>
<div class="num" style="left:8.0px;top:642.0px;width:125.0px;height:20.0px;border-radius:0 0 10px 10px;"><div style="left:0;top:0;width:11px;height:20px;background:linear-gradient(#8a8a8a,#7a7a7a)"></div></div>
<div class="t c" style="left:8.0px;top:647.0px;width:125.0px">Random: 0.000</div>
<svg style="left:0.0px;top:956.0px" width="14" height="12" viewBox="0 0 12 11"><path d="M0,1 L10,11 M0,4 L7,11 M0,7 L4,11" stroke="#c8c8c8" stroke-width="1"/><path d="M0,2 L9,11 M0,5 L6,11 M0,8 L3,11" stroke="#3a3a3a" stroke-width="1"/></svg></div>
<div id="h3d"><div style="left:0;top:0;width:1108px;height:1px;background:#8a8a8a"></div>
<div style="left:0;top:26px;width:1108px;height:1px;background:#000"></div>
<svg style="left:0;top:15px" width="12" height="11" viewBox="0 0 12 11"><path d="M0,1 L10,11 M0,4 L7,11 M0,7 L4,11" stroke="#c8c8c8" stroke-width="1"/><path d="M0,2 L9,11 M0,5 L6,11 M0,8 L3,11" stroke="#3a3a3a" stroke-width="1"/></svg>
<div class="dk" style="left:9px;top:3px;width:30px;height:20px"></div>
<svg style="left:12px;top:5px" width="26" height="16" viewBox="0 0 26 16"><path d="M2,3 L7.5,1 L13,3 L13,10 L7.5,14 L2,10Z" fill="#e8e8e8" stroke="#111" stroke-width="0.9"/><path d="M7.5,5 L13,3 L13,10 L7.5,14Z" fill="#8a8a8a"/><path d="M2,3 L7.5,5 L13,3 M7.5,5 L7.5,14" stroke="#111" stroke-width="0.7" fill="none"/><path d="M20,3 L22.5,7 L17.5,7Z M17.5,8.5 L22.5,8.5 L20,12.5Z" fill="#9a9a9a"/></svg>
<svg style="left:47px;top:8px" width="12" height="12" viewBox="0 0 12 12"><circle cx="6" cy="6" r="4.3" fill="none" stroke="#a8a8a8" stroke-width="1.5"/><rect x="3.3" y="5.3" width="5.4" height="1.5" fill="#a8a8a8"/></svg>
<div class="t" style="left:71px;top:8px">View</div>
<div class="t" style="left:113px;top:8px">Select</div>
<div class="t" style="left:159px;top:8px">Object</div>
<div class="dk" style="left:202px;top:3px;width:125px;height:20px"></div>
<svg style="left:207px;top:5px" width="16" height="16" viewBox="0 0 16 16"><path d="M2,4 L8,1.5 L14,4 L14,11.5 L8,14.5 L2,11.5Z" fill="#e8a050" stroke="#3a2000" stroke-width=".8"/><path d="M2,4 L8,6.5 L14,4 L8,1.5Z" fill="#f8d090"/><path d="M8,6.5 L14,4 L14,11.5 L8,14.5Z" fill="#c07828"/></svg>
<div class="t" style="left:223px;top:8px;color:#fff">Object Mode</div>
<svg style="left:313px;top:6px" width="10" height="14" viewBox="0 0 10 14"><path d="M5,1 L7.5,5.5 L2.5,5.5Z M2.5,7.5 L7.5,7.5 L5,12Z" fill="#9a9a9a"/></svg>
<div class="dk" style="left:333px;top:3px;width:34px;height:20px"></div>
<svg style="left:337px;top:6px" width="28" height="14" viewBox="0 0 28 14"><circle cx="7" cy="7" r="6" fill="#d8c8c0" stroke="#222" stroke-width=".8"/><path d="M7,1 A6,6 0 0,1 13,7 L7,7Z M7,7 L7,13 A6,6 0 0,1 1,7Z" fill="#a04030"/><path d="M21,1 L23.5,5.5 L18.5,5.5Z M18.5,7.5 L23.5,7.5 L21,12Z" fill="#9a9a9a"/></svg>
<div class="dk" style="left:373px;top:3px;width:35px;height:20px;border-radius:5px 0 0 5px"></div>
<svg style="left:376px;top:5px" width="30" height="16" viewBox="0 0 30 16"><circle cx="6" cy="5" r="4" fill="#eee" stroke="#111" stroke-width=".8"/><circle cx="10" cy="10.5" r="4" fill="#eee" stroke="#111" stroke-width=".8"/><rect x="6.5" y="6" width="3" height="3" fill="#3a6ab0"/><path d="M24,2 L26.5,6.5 L21.5,6.5Z M21.5,8.5 L26.5,8.5 L24,13Z" fill="#9a9a9a"/></svg>
<div style="left:408px;top:3px;width:20px;height:20px;background:linear-gradient(#b4b4b4,#9c9c9c);border:1px solid #2a2a2a;border-radius:0 5px 5px 0"></div>
<svg style="left:410px;top:5px" width="16" height="16" viewBox="0 0 16 16"><circle cx="4" cy="3" r="1.5" fill="#fff" stroke="#2a4a80" stroke-width=".8"/><circle cx="8" cy="3" r="1.5" fill="#fff" stroke="#2a4a80" stroke-width=".8"/><circle cx="12" cy="3" r="1.5" fill="#fff" stroke="#2a4a80" stroke-width=".8"/><path d="M2,10 L14,10 M2,10 L5,7.5 M2,10 L5,12.5 M14,10 L11,7.5 M14,10 L11,12.5" stroke="#000" stroke-width="2.6" fill="none"/><path d="M2,10 L14,10 M2,10 L5,7.5 M2,10 L5,12.5 M14,10 L11,7.5 M14,10 L11,12.5" stroke="#fff" stroke-width="1.2" fill="none"/></svg>
<div class="dk" style="left:434px;top:3px;width:39px;height:20px;border-radius:5px 0 0 5px"></div>
<div style="left:453px;top:3px;width:1px;height:20px;background:#222"></div>
<div style="left:472px;top:3px;width:41px;height:20px;background:linear-gradient(#b0b0b0,#9a9a9a);border-top:1px solid #2a2a2a;border-bottom:1px solid #2a2a2a"></div>
<div style="left:491px;top:3px;width:1px;height:20px;background:#555"></div>
<svg style="left:436px;top:5px" width="76" height="16" viewBox="0 0 76 16"><path d="M8,8 L8,1.5" stroke="#3a5ae0" stroke-width="2"/><path d="M8,8 L2,13" stroke="#d83a20" stroke-width="2"/><path d="M8,8 L14,13" stroke="#50c040" stroke-width="2"/><path d="M22,14 L32,4" stroke="#000" stroke-width="3"/><path d="M22,14 L32,4" stroke="#6a9ae0" stroke-width="1.6"/><path d="M34,2 L27,3.5 L32.5,9Z" fill="#6a9ae0" stroke="#000" stroke-width=".8"/><path d="M41,14 C41,7 45,3 52,2" stroke="#5a6a80" stroke-width="3.2" fill="none"/><path d="M41,14 C41,7 45,3 52,2" stroke="#a8c0e0" stroke-width="1.6" fill="none"/><path d="M60,14 L66,8 M64,2 L70,2 L70,8 L64,8Z" stroke="#5a6a80" stroke-width="2.6" fill="none"/><path d="M60,14 L66,8 M64,2 L70,2 L70,8 L64,8Z" stroke="#a8c0e0" stroke-width="1.2" fill="none"/></svg>
<div class="dk" style="left:512px;top:3px;width:71px;height:20px;border-radius:0 5px 5px 0"></div>
<div class="t" style="left:517px;top:8px;color:#fff">Global</div>
<svg style="left:569px;top:6px" width="10" height="14" viewBox="0 0 10 14"><path d="M5,1 L7.5,5.5 L2.5,5.5Z M2.5,7.5 L7.5,7.5 L5,12Z" fill="#9a9a9a"/></svg>
<div style="left:588px;top:3px;width:50px;height:20px;background:linear-gradient(#a4a4a4,#8c8c8c);border:1px solid #3a3a3a;border-radius:5px;overflow:hidden">
<div style="left:9px;top:0;width:1px;height:20px;background:#2e2e2e"></div><div style="left:19px;top:0;width:1px;height:20px;background:#2e2e2e"></div><div style="left:29px;top:0;width:1px;height:20px;background:#2e2e2e"></div><div style="left:39px;top:0;width:1px;height:20px;background:#2e2e2e"></div><div style="left:0;top:9px;width:50px;height:1px;background:#2e2e2e"></div>
<div style="left:1.5px;top:1.5px;width:5px;height:5px;border-radius:50%;background:#888;border:1px solid #4a4a4a"></div><div style="left:21.5px;top:1.5px;width:5px;height:5px;border-radius:50%;background:#888;border:1px solid #4a4a4a"></div><div style="left:31.5px;top:11px;width:5px;height:5px;border-radius:50%;background:#888;border:1px solid #4a4a4a"></div>
</div>
<div style="left:643px;top:3px;width:50px;height:20px;background:linear-gradient(#a4a4a4,#8c8c8c);border:1px solid #3a3a3a;border-radius:5px;overflow:hidden">
<div style="left:9px;top:0;width:1px;height:20px;background:#2e2e2e"></div><div style="left:19px;top:0;width:1px;height:20px;background:#2e2e2e"></div><div style="left:29px;top:0;width:1px;height:20px;background:#2e2e2e"></div><div style="left:39px;top:0;width:1px;height:20px;background:#2e2e2e"></div><div style="left:0;top:9px;width:50px;height:1px;background:#2e2e2e"></div>
<div style="left:1.5px;top:1.5px;width:5px;height:5px;border-radius:50%;background:#888;border:1px solid #4a4a4a"></div><div style="left:11.5px;top:1.5px;width:5px;height:5px;border-radius:50%;background:#f0a040;border:1px solid #5a3a10"></div>
</div>
<div class="btn" style="left:698px;top:3px;width:21px;height:20px;border-color:#3a3a3a;background:linear-gradient(#606060,#545454)"></div>
<svg style="left:701px;top:6px" width="16" height="14" viewBox="0 0 16 14"><rect x="1.5" y="1.5" width="10" height="10" fill="#d8d8d8" stroke="#111"/><rect x="3" y="3" width="7" height="5" fill="#888"/><path d="M11,7 a2,2 0 1,1 0.1,0 M11,10 a2,2 0 1,1 0.1,0" stroke="#111" stroke-width="1.4" fill="none"/></svg>
<div class="btn" style="left:723px;top:3px;width:21px;height:20px;border-color:#3a3a3a"></div>
<svg style="left:726px;top:6px" width="16" height="14" viewBox="0 0 16 14"><circle cx="7.5" cy="7" r="5.5" fill="none" stroke="#aaa" stroke-width="1.5"/><circle cx="7.5" cy="7" r="2.5" fill="none" stroke="#aaa" stroke-width="1.2"/></svg>
<div class="btn" style="left:748px;top:3px;width:21px;height:20px;border-color:#3a3a3a;border-radius:5px 0 0 5px"></div>
<svg style="left:751px;top:6px" width="16" height="14" viewBox="0 0 16 14"><path d="M4,6 a4.5,4.5 0 0,0 9,0 L13,2 L10.5,2 L10.5,6 a2,2 0 0,1 -4,0 L6.5,2 L4,2Z" fill="none" stroke="#111" stroke-width="1" transform="rotate(-35 8 7)"/></svg>
<div class="dk" style="left:768px;top:3px;width:36px;height:20px;border-radius:0 5px 5px 0"></div>
<svg style="left:771px;top:5px" width="32" height="16" viewBox="0 0 32 16"><path d="M4,6 L15,6 M4,11 L15,11 M7,2 L7,15 M12,2 L12,15" stroke="#fff" stroke-width="1.3"/><circle cx="7" cy="5" r="2.8" fill="#4a8ae0" stroke="#fff" stroke-width="1"/><path d="M25,2 L27.5,6.5 L22.5,6.5Z M22.5,8.5 L27.5,8.5 L25,13Z" fill="#9a9a9a"/></svg>
<div class="btn" style="left:808px;top:3px;width:21px;height:20px;border-color:#3a3a3a;border-radius:5px 0 0 5px"></div>
<div class="btn" style="left:828px;top:3px;width:21px;height:20px;border-color:#3a3a3a;border-radius:0 5px 5px 0"></div>
<svg style="left:810px;top:5px" width="38" height="16" viewBox="0 0 38 16"><rect x="2" y="5" width="13" height="9" fill="#d8d8d8" stroke="#111"/><rect x="4" y="3.5" width="4" height="2" fill="#111"/><circle cx="8.5" cy="9.5" r="3" fill="#555" stroke="#111"/><circle cx="8.5" cy="9.5" r="1.2" fill="#c04050"/><path d="M14,1 L15,3 L17,3.5 L15,4.5 L14,6.5 L13,4.5 L11,3.5 L13,3Z" fill="#f0e060"/><rect x="22" y="6" width="13" height="8" fill="#e8e8e8" stroke="#111"/><path d="M22,3 L35,1 L35,4 L22,6Z" fill="#222"/><path d="M25,2.5 L27,5 M29,2 L31,4.5" stroke="#fff" stroke-width="1"/><rect x="24" y="8" width="9" height="1" fill="#555"/><rect x="24" y="10.5" width="9" height="1" fill="#555"/></svg>
</div>
<div id="tl"><div style="left:105px;top:0;width:222px;height:36px;background:#6f6f6f"></div>
<div style="left:22.3px;top:0;width:1px;height:36px;background:#3a3a3a"></div>
<div style="left:50.1px;top:0;width:1px;height:36px;background:#3a3a3a"></div>
<div style="left:77.9px;top:0;width:1px;height:36px;background:#3a3a3a"></div>
<div style="left:133.5px;top:0;width:1px;height:36px;background:#666"></div>
<div style="left:161.3px;top:0;width:1px;height:36px;background:#666"></div>
<div style="left:189.1px;top:0;width:1px;height:36px;background:#666"></div>
<div style="left:216.9px;top:0;width:1px;height:36px;background:#666"></div>
<div style="left:244.7px;top:0;width:1px;height:36px;background:#666"></div>
<div style="left:272.5px;top:0;width:1px;height:36px;background:#666"></div>
<div style="left:300.3px;top:0;width:1px;height:36px;background:#666"></div>
<div style="left:328.1px;top:0;width:1px;height:36px;background:#3a3a3a"></div>
<div style="left:355.9px;top:0;width:1px;height:36px;background:#3a3a3a"></div>
<div style="left:383.7px;top:0;width:1px;height:36px;background:#3a3a3a"></div>
<div style="left:411.5px;top:0;width:1px;height:36px;background:#3a3a3a"></div>
<div style="left:439.3px;top:0;width:1px;height:36px;background:#3a3a3a"></div>
<div style="left:467.1px;top:0;width:1px;height:36px;background:#3a3a3a"></div>
<div style="left:494.9px;top:0;width:1px;height:36px;background:#3a3a3a"></div>
<div style="left:522.7px;top:0;width:1px;height:36px;background:#3a3a3a"></div>
<div style="left:550.5px;top:0;width:1px;height:36px;background:#3a3a3a"></div>
<div style="left:578.3px;top:0;width:1px;height:36px;background:#3a3a3a"></div>
<div style="left:606.1px;top:0;width:1px;height:36px;background:#3a3a3a"></div>
<div style="left:633.9px;top:0;width:1px;height:36px;background:#3a3a3a"></div>
<div style="left:661.7px;top:0;width:1px;height:36px;background:#3a3a3a"></div>
<div style="left:689.5px;top:0;width:1px;height:36px;background:#3a3a3a"></div>
<div style="left:717.3px;top:0;width:1px;height:36px;background:#3a3a3a"></div>
<div style="left:745.1px;top:0;width:1px;height:36px;background:#3a3a3a"></div>
<div style="left:772.9px;top:0;width:1px;height:36px;background:#3a3a3a"></div>
<div style="left:800.7px;top:0;width:1px;height:36px;background:#3a3a3a"></div>
<div style="left:828.5px;top:0;width:1px;height:36px;background:#3a3a3a"></div>
<div style="left:856.3px;top:0;width:1px;height:36px;background:#3a3a3a"></div>
<div style="left:884.1px;top:0;width:1px;height:36px;background:#3a3a3a"></div>
<div style="left:911.9px;top:0;width:1px;height:36px;background:#3a3a3a"></div>
<div style="left:939.7px;top:0;width:1px;height:36px;background:#3a3a3a"></div>
<div style="left:967.5px;top:0;width:1px;height:36px;background:#3a3a3a"></div>
<div style="left:995.3px;top:0;width:1px;height:36px;background:#3a3a3a"></div>
<div style="left:1023.1px;top:0;width:1px;height:36px;background:#3a3a3a"></div>
<div style="left:1050.9px;top:0;width:1px;height:36px;background:#3a3a3a"></div>
<div style="left:1078.7px;top:0;width:1px;height:36px;background:#3a3a3a"></div>
<div style="left:1106.5px;top:0;width:1px;height:36px;background:#3a3a3a"></div>
<div style="left:104px;top:0;width:3px;height:36px;background:#5bc24a"></div>
<svg style="left:1094px;top:0px" width="14" height="12" viewBox="0 0 14 12"><path d="M2,0 L14,12 M6,0 L14,8 M10,0 L14,4" stroke="#c8c8c8" stroke-width="1"/><path d="M3,0 L14,11 M7,0 L14,7 M11,0 L14,3" stroke="#2a2a2a" stroke-width="1"/></svg></div>
<div id="ruler"><div style="left:4px;top:1px;width:1102px;height:13px;border:1px solid #2e2e2e;border-radius:7px;background:linear-gradient(#7c7c7c,#a4a4a4)"></div>
<div style="left:6px;top:3px;width:9px;height:9px;border-radius:50%;background:#666"></div>
<div style="left:1092px;top:3px;width:9px;height:9px;border-radius:50%;background:#666"></div>
<div class="t c" style="left:31.9px;top:2px;width:40px">-20</div>
<div class="t c" style="left:87.0px;top:2px;width:40px">0</div>
<div class="t c" style="left:142.1px;top:2px;width:40px">20</div>
<div class="t c" style="left:197.2px;top:2px;width:40px">40</div>
<div class="t c" style="left:252.4px;top:2px;width:40px">60</div>
<div class="t c" style="left:307.5px;top:2px;width:40px">80</div>
<div class="t c" style="left:362.6px;top:2px;width:40px">100</div>
<div class="t c" style="left:417.7px;top:2px;width:40px">120</div>
<div class="t c" style="left:472.8px;top:2px;width:40px">140</div>
<div class="t c" style="left:528.0px;top:2px;width:40px">160</div>
<div class="t c" style="left:583.1px;top:2px;width:40px">180</div>
<div class="t c" style="left:638.2px;top:2px;width:40px">200</div>
<div class="t c" style="left:693.3px;top:2px;width:40px">220</div>
<div class="t c" style="left:748.4px;top:2px;width:40px">240</div>
<div class="t c" style="left:803.6px;top:2px;width:40px">260</div>
<div class="t c" style="left:858.7px;top:2px;width:40px">280</div>
<div class="t c" style="left:913.8px;top:2px;width:40px">300</div>
<div class="t c" style="left:968.9px;top:2px;width:40px">320</div>
<div class="t c" style="left:1024.0px;top:2px;width:40px">340</div></div>
<div id="hbot"><div style="left:0;top:0;width:1108px;height:1px;background:#5e5e5e"></div>
<svg style="left:0;top:10px" width="12" height="11" viewBox="0 0 12 11"><path d="M0,1 L10,11 M0,4 L7,11 M0,7 L4,11" stroke="#c8c8c8" stroke-width="1"/><path d="M0,2 L9,11 M0,5 L6,11 M0,8 L3,11" stroke="#3a3a3a" stroke-width="1"/></svg>
<div class="dk" style="left:9px;top:1px;width:30px;height:20px"></div>
<svg style="left:12px;top:3px" width="26" height="16" viewBox="0 0 26 16"><circle cx="7.5" cy="8" r="6" fill="#f0f0f0" stroke="#222" stroke-width=".8"/><path d="M7.5,4 L7.5,8 L5,10" stroke="#c03030" stroke-width="1.2" fill="none"/><path d="M20,3 L22.5,7 L17.5,7Z M17.5,8.5 L22.5,8.5 L20,12.5Z" fill="#9a9a9a"/></svg>
<svg style="left:47px;top:5px" width="12" height="12" viewBox="0 0 12 12"><circle cx="6" cy="6" r="4.3" fill="none" stroke="#a8a8a8" stroke-width="1.5"/><rect x="3.3" y="5.3" width="5.4" height="1.5" fill="#a8a8a8"/></svg>
<div class="t" style="left:71px;top:6px">View</div>
<div class="t" style="left:110px;top:6px">Marker</div>
<div class="t" style="left:160px;top:6px">Frame</div>
<div class="t" style="left:206px;top:6px">Playback</div>
<div class="btn" style="left:265px;top:1px;width:20px;height:20px;border-color:#3a3a3a"></div>
<svg style="left:268px;top:4px" width="14" height="14" viewBox="0 0 14 14"><circle cx="7" cy="7" r="5.8" fill="#f8f0e0" stroke="#222" stroke-width=".8"/><path d="M7,7 L7,2 A5,5 0 0,1 12,7Z" fill="#e87a10"/><path d="M7,7 L12,7 A5,5 0 0,1 7,12Z" fill="#e87a10"/></svg>
<div class="num" style="left:290px;top:1px;width:227px;height:20px;border-radius:10px">
<div style="left:115px;top:0;width:1px;height:20px;background:#333"></div>
</div>
<div class="t c" style="left:290px;top:6px;width:116px">Start: 0</div>
<div class="t c" style="left:406px;top:6px;width:111px">End: 80</div>
<svg style="left:296px;top:6px" width="220" height="10" viewBox="0 0 220 10"><path d="M6,1 L2,5 L6,9Z M106,1 L110,5 L106,9Z M123,1 L119,5 L123,9Z M217,1 L221,5 L217,9Z" fill="#8a8a8a"/></svg>
<div class="num" style="left:524px;top:1px;width:89px;height:20px;border-radius:10px"></div>
<div class="t c" style="left:524px;top:6px;width:89px">0</div>
<svg style="left:530px;top:6px" width="80" height="10" viewBox="0 0 80 10"><path d="M6,1 L2,5 L6,9Z M73,1 L77,5 L73,9Z" fill="#8a8a8a"/></svg>
<div class="btn" style="left:630px;top:1px;width:119px;height:20px;border-color:#3a3a3a;overflow:hidden">
<div style="left:19px;top:0;width:1px;height:20px;background:#555"></div><div style="left:39px;top:0;width:1px;height:20px;background:#555"></div><div style="left:59px;top:0;width:1px;height:20px;background:#555"></div><div style="left:79px;top:0;width:1px;height:20px;background:#555"></div><div style="left:99px;top:0;width:1px;height:20px;background:#555"></div>
</div>
<svg style="left:632px;top:4px" width="116" height="14" viewBox="0 0 116 14"><g fill="#fff" stroke="#000" stroke-width=".9">
<path d="M3,2 L5,2 L5,12 L3,12Z M5,7 L10,2 L10,12Z M10,7 L15,2 L15,12Z"/>
<path d="M24,7 L29,2 L29,12Z M29,7 L34,2 L34,12Z"/>
<path d="M44,7 L52,1 L52,13Z"/>
<path d="M63,1 L71,7 L63,13Z"/>
<path d="M82,2 L87,7 L82,12Z M87,2 L92,7 L87,12Z"/>
<path d="M102,2 L107,7 L102,12Z M107,2 L112,7 L107,12Z M112,2 L114,2 L114,12 L112,12Z"/>
</g></svg>
<div class="dk" style="left:754px;top:1px;width:111px;height:20px"></div>
<div class="t" style="left:759px;top:6px;color:#fff">No Sync</div>
<svg style="left:851px;top:4px" width="10" height="14" viewBox="0 0 10 14"><path d="M5,1 L7.5,5.5 L2.5,5.5Z M2.5,7.5 L7.5,7.5 L5,12Z" fill="#9a9a9a"/></svg>
<div class="btn" style="left:881px;top:1px;width:19px;height:20px;border-color:#3a3a3a"></div>
<svg style="left:884px;top:5px" width="13" height="13" viewBox="0 0 13 13"><circle cx="6.5" cy="6.5" r="5" fill="#e83a1a" stroke="#fff" stroke-width="1"/></svg>
<div class="btn" style="left:906px;top:1px;width:146px;height:20px;border-color:#3a3a3a;background:linear-gradient(#a8a8a8,#9a9a9a)"></div>
<div style="left:1011px;top:1px;width:1px;height:20px;background:#333"></div>
<div style="left:1031px;top:1px;width:1px;height:20px;background:#555"></div>
<svg style="left:909px;top:3px" width="142" height="16" viewBox="0 0 142 16"><path d="M4,14 L4,4 M4,9 L9,9 M4,12 L8,12" stroke="#000" stroke-width="2.6" fill="none"/><circle cx="4" cy="3.5" r="2.5" fill="#f0d070" stroke="#000" stroke-width="1"/><path d="M4,14 L4,4 M4,9 L9,9 M4,12 L8,12" stroke="#f0d070" stroke-width="1.2" fill="none"/><path d="M107,13 L116,4" stroke="#000" stroke-width="2.4"/><path d="M107,13 L116,4" stroke="#fff" stroke-width="1"/><circle cx="117" cy="3.5" r="2" fill="#fff" stroke="#000"/><path d="M127,13 L136,4" stroke="#000" stroke-width="2.4"/><path d="M127,13 L136,4" stroke="#fff" stroke-width="1"/><circle cx="137" cy="3.5" r="2" fill="#fff" stroke="#000"/><path d="M126,3 L138,14 M138,3 L126,14" stroke="#d83030" stroke-width="1.8"/></svg>
</div>
</body></html>
